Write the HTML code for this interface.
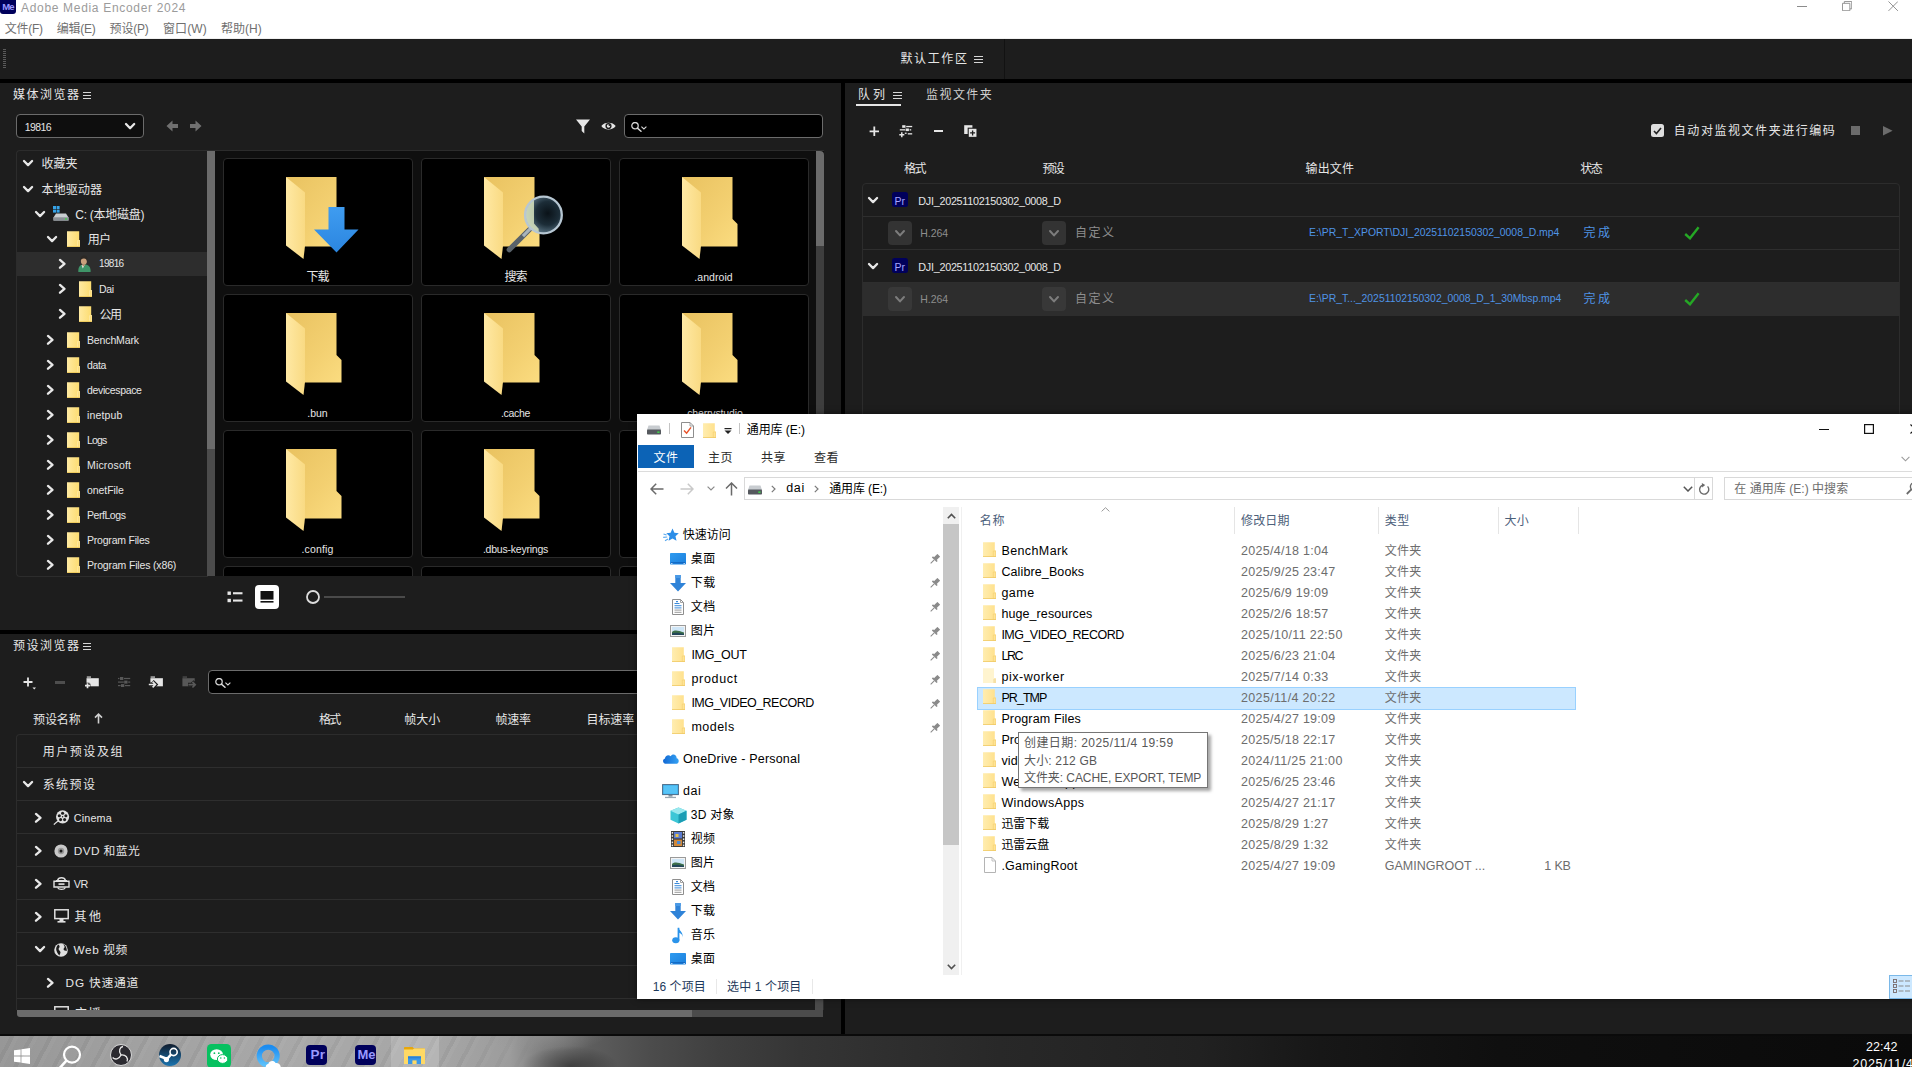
<!DOCTYPE html>
<html lang="zh-CN"><head><meta charset="utf-8"><title>Adobe Media Encoder 2024</title>
<style>
html,body{margin:0;padding:0}
body{width:1912px;height:1067px;overflow:hidden;background:#1d1d1d;position:relative;font-family:"Liberation Sans","Noto Sans CJK SC",sans-serif;}
div,span.t,svg{position:absolute}
span.t{white-space:nowrap;display:block}
.clip{overflow:hidden}
</style></head><body>
<div style="left:0px;top:0px;width:1912px;height:39px;background:#fff"></div>
<div style="left:0px;top:38px;width:1912px;height:1px;background:#f0f0f0"></div>
<div style="left:0;top:-3px;width:16px;height:17px;background:#00005b;border-radius:3px"></div>
<span class="t" style="left:2.2px;top:-3.0px;font-size:9.5px;line-height:20px;color:#9999ff;letter-spacing:-0.87px;font-weight:bold;">Me</span>
<span class="t" style="left:21px;top:-1.8px;font-size:12px;line-height:20px;color:#9b9b9b;letter-spacing:0.68px;">Adobe Media Encoder 2024</span>
<span class="t" style="left:4.7px;top:19.2px;font-size:12px;line-height:20px;color:#6f6f6f;letter-spacing:-0.23px;">文件(F)</span>
<span class="t" style="left:56.8px;top:19.2px;font-size:12px;line-height:20px;color:#6f6f6f;letter-spacing:-0.24px;">编辑(E)</span>
<span class="t" style="left:109.6px;top:19.2px;font-size:12px;line-height:20px;color:#6f6f6f;letter-spacing:-0.2px;">预设(P)</span>
<span class="t" style="left:163px;top:19.2px;font-size:12px;line-height:20px;color:#6f6f6f;letter-spacing:0.12px;">窗口(W)</span>
<span class="t" style="left:221px;top:19.2px;font-size:12px;line-height:20px;color:#6f6f6f;letter-spacing:0.04px;">帮助(H)</span>
<svg style="left:1797px;top:6px;" width="10" height="1" viewBox="0 0 10 1"><rect width="10" height="1" fill="#8c8c8c"/></svg>
<svg style="left:1842px;top:1px;" width="10.2" height="10.2" viewBox="0 0 11 11"><path d="M2.5 2.5 V0.5 H10.5 V8.5 H8.5 M0.5 2.5 H8.5 V10.5 H0.5 Z" fill="none" stroke="#8c8c8c" stroke-width="1"/></svg>
<svg style="left:1888px;top:1px;" width="10.4" height="10.4" viewBox="0 0 11 11"><path d="M0.5 0.5 L10.5 10.5 M10.5 0.5 L0.5 10.5" fill="none" stroke="#8c8c8c" stroke-width="1"/></svg>
<div style="left:0px;top:39px;width:1912px;height:40px;background:#1d1d1d"></div>
<div style="left:0px;top:79px;width:1912px;height:4px;background:#000"></div>
<div style="left:1003.5px;top:39px;width:1.5px;height:40px;background:#121212"></div>
<div style="left:3px;top:49px;width:3px;height:20px;background:repeating-linear-gradient(180deg,#5a5a5a 0 1px,transparent 1px 2px)"></div>
<span class="t" style="left:900.5px;top:48.7px;font-size:12px;line-height:20px;color:#e6e6e6;letter-spacing:1.6px;">默认工作区</span>
<div style="left:974px;top:56px;width:8.5px;height:1px;background:#e6e6e6;opacity:0.92"></div>
<div style="left:974px;top:59px;width:8.5px;height:1px;background:#e6e6e6;opacity:0.92"></div>
<div style="left:974px;top:62px;width:8.5px;height:1px;background:#e6e6e6;opacity:0.92"></div>
<div style="left:841px;top:83px;width:4px;height:952px;background:#000"></div>
<div style="left:0px;top:630px;width:841px;height:4px;background:#000"></div>
<div style="left:0px;top:1034px;width:1912px;height:2px;background:#0a0a0a"></div>
<span class="t" style="left:13px;top:84.7px;font-size:12px;line-height:20px;color:#e6e6e6;letter-spacing:1.48px;">媒体浏览器</span>
<div style="left:82.8px;top:92px;width:8.5px;height:1px;background:#e6e6e6;opacity:0.92"></div>
<div style="left:82.8px;top:95px;width:8.5px;height:1px;background:#e6e6e6;opacity:0.92"></div>
<div style="left:82.8px;top:98px;width:8.5px;height:1px;background:#e6e6e6;opacity:0.92"></div>
<div style="left:16px;top:114px;width:126px;height:22px;background:#0e0e0e;border:1px solid #6b6b6b;border-radius:4px"></div>
<span class="t" style="left:24.8px;top:117.2px;font-size:10.5px;line-height:20px;color:#e6e6e6;letter-spacing:-0.58px;">19816</span>
<svg style="left:123.9px;top:122.2px;" width="12.2" height="8.2" viewBox="0 0 12.2 8.2"><path d="M2 2 L6.1 6.2 L10.2 2" fill="none" stroke="#e8e8e8" stroke-width="2.3" stroke-linecap="round" stroke-linejoin="round"/></svg>
<svg style="left:166px;top:120px;" width="12" height="12" viewBox="0 0 12 12"><path d="M6.5 0.5 L0.5 6 L6.5 11.5 V8 H12 V4 H6.5 Z" fill="#707070"/></svg>
<svg style="left:190px;top:120px;" width="12" height="12" viewBox="0 0 12 12"><path d="M5.5 0.5 L11.5 6 L5.5 11.5 V8 H0 V4 H5.5 Z" fill="#707070"/></svg>
<svg style="left:576px;top:119px;" width="14" height="15" viewBox="0 0 14 15"><path d="M0 0.5 H14 L8.3 7.5 V14.5 L5.7 12 V7.5 Z" fill="#e6e6e6"/></svg>
<svg style="left:601px;top:121px;" width="15" height="10" viewBox="0 0 15 10"><path d="M0.3 5 C3 0.5 12 0.5 14.7 5 C12 9.5 3 9.5 0.3 5 Z" fill="#e6e6e6"/><circle cx="7.5" cy="5" r="3.1" fill="#1d1d1d"/><circle cx="7.5" cy="5" r="1.7" fill="#e6e6e6"/><circle cx="8.4" cy="4" r="0.9" fill="#1d1d1d"/></svg>
<div style="left:624px;top:114px;width:197px;height:22px;background:#000;border:1px solid #6b6b6b;border-radius:4px"></div>
<svg style="left:631.4px;top:122.2px;" width="16" height="10" viewBox="0 0 16 10"><circle cx="4" cy="3.7" r="3.2" fill="none" stroke="#d8d8d8" stroke-width="1.25"/><path d="M6.4 6.1 L10 9.2" stroke="#d8d8d8" stroke-width="1.5" stroke-linecap="round"/><path d="M10.4 4.6 L12.9 6.9 L15.4 4.6" fill="none" stroke="#d8d8d8" stroke-width="1.1"/></svg>
<div style="left:16px;top:150px;width:191px;height:425px;border:1px solid #2c2c2c;border-right:none;border-radius:4px 0 0 4px;background:#1d1d1d"></div>
<div style="left:17px;top:252px;width:190px;height:24px;background:#2d2d2d"></div>
<div style="left:207px;top:150px;width:9px;height:1px;background:#2c2c2c"></div>
<div style="left:207px;top:151px;width:8px;height:298px;background:#6b6b6b"></div>
<div style="left:207px;top:449px;width:8px;height:127px;background:#4b4b4b"></div>
<svg style="left:21.95px;top:159.15px;" width="12.1" height="8.1" viewBox="0 0 12.1 8.1"><path d="M2 2 L6.05 6.1 L10.1 2" fill="none" stroke="#e8e8e8" stroke-width="2.3" stroke-linecap="round" stroke-linejoin="round"/></svg>
<span class="t" style="left:41.6px;top:154.2px;font-size:12px;line-height:20px;color:#e6e6e6;letter-spacing:-0.05px;">收藏夹</span>
<svg style="left:21.95px;top:184.65px;" width="12.1" height="8.1" viewBox="0 0 12.1 8.1"><path d="M2 2 L6.05 6.1 L10.1 2" fill="none" stroke="#e8e8e8" stroke-width="2.3" stroke-linecap="round" stroke-linejoin="round"/></svg>
<span class="t" style="left:41.6px;top:179.7px;font-size:12px;line-height:20px;color:#e6e6e6;letter-spacing:0.1px;">本地驱动器</span>
<svg style="left:33.95px;top:209.85px;" width="12.1" height="8.1" viewBox="0 0 12.1 8.1"><path d="M2 2 L6.05 6.1 L10.1 2" fill="none" stroke="#e8e8e8" stroke-width="2.3" stroke-linecap="round" stroke-linejoin="round"/></svg>
<svg style="left:52.5px;top:206.2px;" width="16" height="15" viewBox="0 0 16 15"><rect x="0" y="0" width="3" height="3" fill="#36a3e8"/><rect x="3.6" y="0" width="3" height="3" fill="#36a3e8"/><rect x="0" y="3.6" width="3" height="3" fill="#36a3e8"/><rect x="3.6" y="3.6" width="3" height="3" fill="#36a3e8"/><path d="M3 7.5 H13 L15.5 11.5 V14.5 H0.5 V11.5 Z" fill="#c9cdd0"/><rect x="0.5" y="11.3" width="15" height="3.4" fill="#8a9096"/><rect x="12" y="12.3" width="2" height="1.4" fill="#44d048"/></svg>
<span class="t" style="left:75.3px;top:204.9px;font-size:12px;line-height:20px;color:#e6e6e6;letter-spacing:-0.26px;">C: (本地磁盘)</span>
<svg style="left:45.95px;top:234.65px;" width="12.1" height="8.1" viewBox="0 0 12.1 8.1"><path d="M2 2 L6.05 6.1 L10.1 2" fill="none" stroke="#e8e8e8" stroke-width="2.3" stroke-linecap="round" stroke-linejoin="round"/></svg>
<svg style="left:66.8px;top:231px;" width="13.3" height="16" viewBox="0 0 13.3 16"><defs><linearGradient id="sf" x1="0" y1="0" x2="1" y2="0"><stop offset="0" stop-color="#ffeaa2"/><stop offset="1" stop-color="#fcdb6c"/></linearGradient></defs>
<path d="M0 0.3 H12.2 V9.3 H13.3 V16 H0 Z" fill="url(#sf)"/><path d="M10.5 9.6 H13 V15.6 H10.5 Z" fill="#fbdd7c" stroke="#ffefb4" stroke-width="0.6"/><rect x="0" y="15.2" width="13.3" height="0.8" fill="#ecc655"/></svg>
<span class="t" style="left:87.7px;top:229.7px;font-size:12px;line-height:20px;color:#e6e6e6;letter-spacing:-0.6px;">用户</span>
<svg style="left:57.75px;top:258.15px;" width="8.5" height="11.7" viewBox="0 0 8.5 11.7"><path d="M2 2 L6.5 5.85 L2 9.7" fill="none" stroke="#e8e8e8" stroke-width="2.3" stroke-linecap="round" stroke-linejoin="round"/></svg>
<svg style="left:78.3px;top:254.5px;" width="13" height="17" viewBox="0 0 13 17"><path d="M0.3 17 C0 12 2 10 5 9.6 L8 9.6 C11.5 10.5 12.8 13 12.6 17 Z" fill="#3f9468"/><path d="M3.6 10 L4.8 13.6 L6.6 10 Z" fill="#eef2ee"/><path d="M4 9.6 L5 11.8 L7.4 9.4 Z" fill="#b88a68"/><ellipse cx="5.9" cy="6" rx="3" ry="3.8" fill="#c9a07c"/><path d="M2.6 5.4 C2 1.8 4.6 0.2 6.6 0.6 C9.2 0.8 9.8 3 9 6.4 C8.6 4.4 7.6 3.4 5.6 3.6 C4 3.8 3.2 4.4 2.6 5.4 Z" fill="#2b2825"/></svg>
<span class="t" style="left:99px;top:254.2px;font-size:10px;line-height:20px;color:#e6e6e6;letter-spacing:-0.67px;">19816</span>
<svg style="left:57.75px;top:283.15px;" width="8.5" height="11.7" viewBox="0 0 8.5 11.7"><path d="M2 2 L6.5 5.85 L2 9.7" fill="none" stroke="#e8e8e8" stroke-width="2.3" stroke-linecap="round" stroke-linejoin="round"/></svg>
<svg style="left:78.7px;top:281px;" width="13.3" height="16" viewBox="0 0 13.3 16"><defs><linearGradient id="sf" x1="0" y1="0" x2="1" y2="0"><stop offset="0" stop-color="#ffeaa2"/><stop offset="1" stop-color="#fcdb6c"/></linearGradient></defs>
<path d="M0 0.3 H12.2 V9.3 H13.3 V16 H0 Z" fill="url(#sf)"/><path d="M10.5 9.6 H13 V15.6 H10.5 Z" fill="#fbdd7c" stroke="#ffefb4" stroke-width="0.6"/><rect x="0" y="15.2" width="13.3" height="0.8" fill="#ecc655"/></svg>
<span class="t" style="left:99px;top:279.2px;font-size:10.5px;line-height:20px;color:#e6e6e6;letter-spacing:-0.3px;">Dai</span>
<svg style="left:57.75px;top:308.15px;" width="8.5" height="11.7" viewBox="0 0 8.5 11.7"><path d="M2 2 L6.5 5.85 L2 9.7" fill="none" stroke="#e8e8e8" stroke-width="2.3" stroke-linecap="round" stroke-linejoin="round"/></svg>
<svg style="left:78.7px;top:306px;" width="13.3" height="16" viewBox="0 0 13.3 16"><defs><linearGradient id="sf" x1="0" y1="0" x2="1" y2="0"><stop offset="0" stop-color="#ffeaa2"/><stop offset="1" stop-color="#fcdb6c"/></linearGradient></defs>
<path d="M0 0.3 H12.2 V9.3 H13.3 V16 H0 Z" fill="url(#sf)"/><path d="M10.5 9.6 H13 V15.6 H10.5 Z" fill="#fbdd7c" stroke="#ffefb4" stroke-width="0.6"/><rect x="0" y="15.2" width="13.3" height="0.8" fill="#ecc655"/></svg>
<span class="t" style="left:99.5px;top:304.7px;font-size:12px;line-height:20px;color:#e6e6e6;letter-spacing:-1.6px;">公用</span>
<svg style="left:45.75px;top:333.65px;" width="8.5" height="11.7" viewBox="0 0 8.5 11.7"><path d="M2 2 L6.5 5.85 L2 9.7" fill="none" stroke="#e8e8e8" stroke-width="2.3" stroke-linecap="round" stroke-linejoin="round"/></svg>
<svg style="left:66.8px;top:331.5px;" width="13.3" height="16" viewBox="0 0 13.3 16"><defs><linearGradient id="sf" x1="0" y1="0" x2="1" y2="0"><stop offset="0" stop-color="#ffeaa2"/><stop offset="1" stop-color="#fcdb6c"/></linearGradient></defs>
<path d="M0 0.3 H12.2 V9.3 H13.3 V16 H0 Z" fill="url(#sf)"/><path d="M10.5 9.6 H13 V15.6 H10.5 Z" fill="#fbdd7c" stroke="#ffefb4" stroke-width="0.6"/><rect x="0" y="15.2" width="13.3" height="0.8" fill="#ecc655"/></svg>
<span class="t" style="left:87px;top:329.7px;font-size:10.5px;line-height:20px;color:#e6e6e6;letter-spacing:-0.13px;">BenchMark</span>
<svg style="left:45.75px;top:358.65px;" width="8.5" height="11.7" viewBox="0 0 8.5 11.7"><path d="M2 2 L6.5 5.85 L2 9.7" fill="none" stroke="#e8e8e8" stroke-width="2.3" stroke-linecap="round" stroke-linejoin="round"/></svg>
<svg style="left:66.8px;top:356.5px;" width="13.3" height="16" viewBox="0 0 13.3 16"><defs><linearGradient id="sf" x1="0" y1="0" x2="1" y2="0"><stop offset="0" stop-color="#ffeaa2"/><stop offset="1" stop-color="#fcdb6c"/></linearGradient></defs>
<path d="M0 0.3 H12.2 V9.3 H13.3 V16 H0 Z" fill="url(#sf)"/><path d="M10.5 9.6 H13 V15.6 H10.5 Z" fill="#fbdd7c" stroke="#ffefb4" stroke-width="0.6"/><rect x="0" y="15.2" width="13.3" height="0.8" fill="#ecc655"/></svg>
<span class="t" style="left:87px;top:354.7px;font-size:10.5px;line-height:20px;color:#e6e6e6;letter-spacing:-0.36px;">data</span>
<svg style="left:45.75px;top:383.65px;" width="8.5" height="11.7" viewBox="0 0 8.5 11.7"><path d="M2 2 L6.5 5.85 L2 9.7" fill="none" stroke="#e8e8e8" stroke-width="2.3" stroke-linecap="round" stroke-linejoin="round"/></svg>
<svg style="left:66.8px;top:381.5px;" width="13.3" height="16" viewBox="0 0 13.3 16"><defs><linearGradient id="sf" x1="0" y1="0" x2="1" y2="0"><stop offset="0" stop-color="#ffeaa2"/><stop offset="1" stop-color="#fcdb6c"/></linearGradient></defs>
<path d="M0 0.3 H12.2 V9.3 H13.3 V16 H0 Z" fill="url(#sf)"/><path d="M10.5 9.6 H13 V15.6 H10.5 Z" fill="#fbdd7c" stroke="#ffefb4" stroke-width="0.6"/><rect x="0" y="15.2" width="13.3" height="0.8" fill="#ecc655"/></svg>
<span class="t" style="left:87px;top:379.7px;font-size:10.5px;line-height:20px;color:#e6e6e6;letter-spacing:-0.35px;">devicespace</span>
<svg style="left:45.75px;top:408.65px;" width="8.5" height="11.7" viewBox="0 0 8.5 11.7"><path d="M2 2 L6.5 5.85 L2 9.7" fill="none" stroke="#e8e8e8" stroke-width="2.3" stroke-linecap="round" stroke-linejoin="round"/></svg>
<svg style="left:66.8px;top:406.5px;" width="13.3" height="16" viewBox="0 0 13.3 16"><defs><linearGradient id="sf" x1="0" y1="0" x2="1" y2="0"><stop offset="0" stop-color="#ffeaa2"/><stop offset="1" stop-color="#fcdb6c"/></linearGradient></defs>
<path d="M0 0.3 H12.2 V9.3 H13.3 V16 H0 Z" fill="url(#sf)"/><path d="M10.5 9.6 H13 V15.6 H10.5 Z" fill="#fbdd7c" stroke="#ffefb4" stroke-width="0.6"/><rect x="0" y="15.2" width="13.3" height="0.8" fill="#ecc655"/></svg>
<span class="t" style="left:87px;top:404.7px;font-size:10.5px;line-height:20px;color:#e6e6e6;letter-spacing:0.15px;">inetpub</span>
<svg style="left:45.75px;top:433.65px;" width="8.5" height="11.7" viewBox="0 0 8.5 11.7"><path d="M2 2 L6.5 5.85 L2 9.7" fill="none" stroke="#e8e8e8" stroke-width="2.3" stroke-linecap="round" stroke-linejoin="round"/></svg>
<svg style="left:66.8px;top:431.5px;" width="13.3" height="16" viewBox="0 0 13.3 16"><defs><linearGradient id="sf" x1="0" y1="0" x2="1" y2="0"><stop offset="0" stop-color="#ffeaa2"/><stop offset="1" stop-color="#fcdb6c"/></linearGradient></defs>
<path d="M0 0.3 H12.2 V9.3 H13.3 V16 H0 Z" fill="url(#sf)"/><path d="M10.5 9.6 H13 V15.6 H10.5 Z" fill="#fbdd7c" stroke="#ffefb4" stroke-width="0.6"/><rect x="0" y="15.2" width="13.3" height="0.8" fill="#ecc655"/></svg>
<span class="t" style="left:87px;top:429.7px;font-size:10.5px;line-height:20px;color:#e6e6e6;letter-spacing:-0.8px;">Logs</span>
<svg style="left:45.75px;top:458.65px;" width="8.5" height="11.7" viewBox="0 0 8.5 11.7"><path d="M2 2 L6.5 5.85 L2 9.7" fill="none" stroke="#e8e8e8" stroke-width="2.3" stroke-linecap="round" stroke-linejoin="round"/></svg>
<svg style="left:66.8px;top:456.5px;" width="13.3" height="16" viewBox="0 0 13.3 16"><defs><linearGradient id="sf" x1="0" y1="0" x2="1" y2="0"><stop offset="0" stop-color="#ffeaa2"/><stop offset="1" stop-color="#fcdb6c"/></linearGradient></defs>
<path d="M0 0.3 H12.2 V9.3 H13.3 V16 H0 Z" fill="url(#sf)"/><path d="M10.5 9.6 H13 V15.6 H10.5 Z" fill="#fbdd7c" stroke="#ffefb4" stroke-width="0.6"/><rect x="0" y="15.2" width="13.3" height="0.8" fill="#ecc655"/></svg>
<span class="t" style="left:87px;top:454.7px;font-size:10.5px;line-height:20px;color:#e6e6e6;letter-spacing:0.16px;">Microsoft</span>
<svg style="left:45.75px;top:483.65px;" width="8.5" height="11.7" viewBox="0 0 8.5 11.7"><path d="M2 2 L6.5 5.85 L2 9.7" fill="none" stroke="#e8e8e8" stroke-width="2.3" stroke-linecap="round" stroke-linejoin="round"/></svg>
<svg style="left:66.8px;top:481.5px;" width="13.3" height="16" viewBox="0 0 13.3 16"><defs><linearGradient id="sf" x1="0" y1="0" x2="1" y2="0"><stop offset="0" stop-color="#ffeaa2"/><stop offset="1" stop-color="#fcdb6c"/></linearGradient></defs>
<path d="M0 0.3 H12.2 V9.3 H13.3 V16 H0 Z" fill="url(#sf)"/><path d="M10.5 9.6 H13 V15.6 H10.5 Z" fill="#fbdd7c" stroke="#ffefb4" stroke-width="0.6"/><rect x="0" y="15.2" width="13.3" height="0.8" fill="#ecc655"/></svg>
<span class="t" style="left:87px;top:479.7px;font-size:10.5px;line-height:20px;color:#e6e6e6;letter-spacing:-0.07px;">onetFile</span>
<svg style="left:45.75px;top:508.65px;" width="8.5" height="11.7" viewBox="0 0 8.5 11.7"><path d="M2 2 L6.5 5.85 L2 9.7" fill="none" stroke="#e8e8e8" stroke-width="2.3" stroke-linecap="round" stroke-linejoin="round"/></svg>
<svg style="left:66.8px;top:506.5px;" width="13.3" height="16" viewBox="0 0 13.3 16"><defs><linearGradient id="sf" x1="0" y1="0" x2="1" y2="0"><stop offset="0" stop-color="#ffeaa2"/><stop offset="1" stop-color="#fcdb6c"/></linearGradient></defs>
<path d="M0 0.3 H12.2 V9.3 H13.3 V16 H0 Z" fill="url(#sf)"/><path d="M10.5 9.6 H13 V15.6 H10.5 Z" fill="#fbdd7c" stroke="#ffefb4" stroke-width="0.6"/><rect x="0" y="15.2" width="13.3" height="0.8" fill="#ecc655"/></svg>
<span class="t" style="left:87px;top:504.7px;font-size:10.5px;line-height:20px;color:#e6e6e6;letter-spacing:-0.45px;">PerfLogs</span>
<svg style="left:45.75px;top:533.65px;" width="8.5" height="11.7" viewBox="0 0 8.5 11.7"><path d="M2 2 L6.5 5.85 L2 9.7" fill="none" stroke="#e8e8e8" stroke-width="2.3" stroke-linecap="round" stroke-linejoin="round"/></svg>
<svg style="left:66.8px;top:531.5px;" width="13.3" height="16" viewBox="0 0 13.3 16"><defs><linearGradient id="sf" x1="0" y1="0" x2="1" y2="0"><stop offset="0" stop-color="#ffeaa2"/><stop offset="1" stop-color="#fcdb6c"/></linearGradient></defs>
<path d="M0 0.3 H12.2 V9.3 H13.3 V16 H0 Z" fill="url(#sf)"/><path d="M10.5 9.6 H13 V15.6 H10.5 Z" fill="#fbdd7c" stroke="#ffefb4" stroke-width="0.6"/><rect x="0" y="15.2" width="13.3" height="0.8" fill="#ecc655"/></svg>
<span class="t" style="left:87px;top:529.7px;font-size:10.5px;line-height:20px;color:#e6e6e6;letter-spacing:-0.21px;">Program Files</span>
<svg style="left:45.75px;top:558.65px;" width="8.5" height="11.7" viewBox="0 0 8.5 11.7"><path d="M2 2 L6.5 5.85 L2 9.7" fill="none" stroke="#e8e8e8" stroke-width="2.3" stroke-linecap="round" stroke-linejoin="round"/></svg>
<svg style="left:66.8px;top:556.5px;" width="13.3" height="16" viewBox="0 0 13.3 16"><defs><linearGradient id="sf" x1="0" y1="0" x2="1" y2="0"><stop offset="0" stop-color="#ffeaa2"/><stop offset="1" stop-color="#fcdb6c"/></linearGradient></defs>
<path d="M0 0.3 H12.2 V9.3 H13.3 V16 H0 Z" fill="url(#sf)"/><path d="M10.5 9.6 H13 V15.6 H10.5 Z" fill="#fbdd7c" stroke="#ffefb4" stroke-width="0.6"/><rect x="0" y="15.2" width="13.3" height="0.8" fill="#ecc655"/></svg>
<span class="t" style="left:87px;top:554.7px;font-size:10.5px;line-height:20px;color:#e6e6e6;letter-spacing:-0.16px;">Program Files (x86)</span>
<div class="clip" style="left:215px;top:150px;width:609px;height:426px;background:#0f0f0f;border-top:1px solid #2c2c2c;box-sizing:border-box">
<div style="left:8px;top:7px;width:188px;height:126px;background:#000;border:1px solid #2a2a2a;border-radius:4px"></div>
<div style="left:206px;top:7px;width:188px;height:126px;background:#000;border:1px solid #2a2a2a;border-radius:4px"></div>
<div style="left:404px;top:7px;width:188px;height:126px;background:#000;border:1px solid #2a2a2a;border-radius:4px"></div>
<div style="left:8px;top:143px;width:188px;height:126px;background:#000;border:1px solid #2a2a2a;border-radius:4px"></div>
<div style="left:206px;top:143px;width:188px;height:126px;background:#000;border:1px solid #2a2a2a;border-radius:4px"></div>
<div style="left:404px;top:143px;width:188px;height:126px;background:#000;border:1px solid #2a2a2a;border-radius:4px"></div>
<div style="left:8px;top:279px;width:188px;height:126px;background:#000;border:1px solid #2a2a2a;border-radius:4px"></div>
<div style="left:206px;top:279px;width:188px;height:126px;background:#000;border:1px solid #2a2a2a;border-radius:4px"></div>
<div style="left:404px;top:279px;width:188px;height:126px;background:#000;border:1px solid #2a2a2a;border-radius:4px"></div>
<div style="left:8px;top:415px;width:188px;height:126px;background:#000;border:1px solid #2a2a2a;border-radius:4px"></div>
<div style="left:206px;top:415px;width:188px;height:126px;background:#000;border:1px solid #2a2a2a;border-radius:4px"></div>
<div style="left:404px;top:415px;width:188px;height:126px;background:#000;border:1px solid #2a2a2a;border-radius:4px"></div>
</div>
<svg style="left:285.5px;top:176.9px;" width="56" height="83" viewBox="0 0 56 83"><defs>
<linearGradient id="bfb" x1="0" y1="0" x2="1" y2="1"><stop offset="0" stop-color="#e9c260"/><stop offset="0.6" stop-color="#f3d071"/><stop offset="1" stop-color="#fbdc80"/></linearGradient>
<linearGradient id="bff" x1="0" y1="0" x2="1" y2="0"><stop offset="0" stop-color="#ffe9a4"/><stop offset="1" stop-color="#f9da83"/></linearGradient>
</defs>
<path d="M0 0 H50.5 V42 L55.5 47 V69.5 H17 Z" fill="url(#bfb)"/>
<path d="M0 0 L19 15.5 V69 L17.5 82 L0 68.5 Z" fill="url(#bff)"/></svg>
<svg style="left:313.5px;top:207px;" width="45" height="46" viewBox="0 0 45 46"><defs><linearGradient id="dla" x1="0" y1="0" x2="0" y2="1"><stop offset="0" stop-color="#3f9cf0"/><stop offset="1" stop-color="#2b86e0"/></linearGradient></defs><path d="M14.5 0 H30.5 V22.5 H44.5 L22.5 45.5 L0 22.5 H14.5 Z" fill="url(#dla)"/></svg>
<span class="t" style="left:117.5px;width:400px;text-align:center;top:266.7px;font-size:12px;line-height:20px;color:#e6e6e6;letter-spacing:-1.1px;"><span>下载</span></span>
<svg style="left:483.5px;top:176.9px;" width="56" height="83" viewBox="0 0 56 83"><defs>
<linearGradient id="bfb" x1="0" y1="0" x2="1" y2="1"><stop offset="0" stop-color="#e9c260"/><stop offset="0.6" stop-color="#f3d071"/><stop offset="1" stop-color="#fbdc80"/></linearGradient>
<linearGradient id="bff" x1="0" y1="0" x2="1" y2="0"><stop offset="0" stop-color="#ffe9a4"/><stop offset="1" stop-color="#f9da83"/></linearGradient>
</defs>
<path d="M0 0 H50.5 V42 L55.5 47 V69.5 H17 Z" fill="url(#bfb)"/>
<path d="M0 0 L19 15.5 V69 L17.5 82 L0 68.5 Z" fill="url(#bff)"/></svg>
<svg style="left:502.5px;top:193px;" width="63" height="63" viewBox="0 0 60 60"><defs><radialGradient id="mg" cx="0.62" cy="0.45" r="0.6"><stop offset="0" stop-color="#0a1218"/><stop offset="0.55" stop-color="#1c2d38"/><stop offset="1" stop-color="#5c7686"/></radialGradient>
<clipPath id="mgc"><circle cx="38.5" cy="21" r="17"/></clipPath></defs>
<path d="M25 35 L6 54" stroke="#59626a" stroke-width="5" stroke-linecap="round"/><path d="M27 33 L19 41" stroke="#aab4bb" stroke-width="3"/>
<circle cx="38.5" cy="21" r="17" fill="url(#mg)"/>
<g clip-path="url(#mgc)"><path d="M18 0 H29.5 V29 L34 34 V45 H18 Z" fill="#d8e4c0" opacity="0.85"/></g>
<circle cx="38.5" cy="21" r="17.5" fill="none" stroke="#b7c7d3" stroke-width="2.2"/></svg>
<span class="t" style="left:315.5px;width:400px;text-align:center;top:266.7px;font-size:12px;line-height:20px;color:#e6e6e6;letter-spacing:-1.1px;"><span>搜索</span></span>
<svg style="left:681.5px;top:176.9px;" width="56" height="83" viewBox="0 0 56 83"><defs>
<linearGradient id="bfb" x1="0" y1="0" x2="1" y2="1"><stop offset="0" stop-color="#e9c260"/><stop offset="0.6" stop-color="#f3d071"/><stop offset="1" stop-color="#fbdc80"/></linearGradient>
<linearGradient id="bff" x1="0" y1="0" x2="1" y2="0"><stop offset="0" stop-color="#ffe9a4"/><stop offset="1" stop-color="#f9da83"/></linearGradient>
</defs>
<path d="M0 0 H50.5 V42 L55.5 47 V69.5 H17 Z" fill="url(#bfb)"/>
<path d="M0 0 L19 15.5 V69 L17.5 82 L0 68.5 Z" fill="url(#bff)"/></svg>
<span class="t" style="left:513.5px;width:400px;text-align:center;top:266.7px;font-size:10.5px;line-height:20px;color:#e6e6e6;letter-spacing:0.06px;"><span>.android</span></span>
<svg style="left:285.5px;top:312.9px;" width="56" height="83" viewBox="0 0 56 83"><defs>
<linearGradient id="bfb" x1="0" y1="0" x2="1" y2="1"><stop offset="0" stop-color="#e9c260"/><stop offset="0.6" stop-color="#f3d071"/><stop offset="1" stop-color="#fbdc80"/></linearGradient>
<linearGradient id="bff" x1="0" y1="0" x2="1" y2="0"><stop offset="0" stop-color="#ffe9a4"/><stop offset="1" stop-color="#f9da83"/></linearGradient>
</defs>
<path d="M0 0 H50.5 V42 L55.5 47 V69.5 H17 Z" fill="url(#bfb)"/>
<path d="M0 0 L19 15.5 V69 L17.5 82 L0 68.5 Z" fill="url(#bff)"/></svg>
<span class="t" style="left:117.5px;width:400px;text-align:center;top:402.7px;font-size:10.5px;line-height:20px;color:#e6e6e6;letter-spacing:-0.02px;"><span>.bun</span></span>
<svg style="left:483.5px;top:312.9px;" width="56" height="83" viewBox="0 0 56 83"><defs>
<linearGradient id="bfb" x1="0" y1="0" x2="1" y2="1"><stop offset="0" stop-color="#e9c260"/><stop offset="0.6" stop-color="#f3d071"/><stop offset="1" stop-color="#fbdc80"/></linearGradient>
<linearGradient id="bff" x1="0" y1="0" x2="1" y2="0"><stop offset="0" stop-color="#ffe9a4"/><stop offset="1" stop-color="#f9da83"/></linearGradient>
</defs>
<path d="M0 0 H50.5 V42 L55.5 47 V69.5 H17 Z" fill="url(#bfb)"/>
<path d="M0 0 L19 15.5 V69 L17.5 82 L0 68.5 Z" fill="url(#bff)"/></svg>
<span class="t" style="left:315.5px;width:400px;text-align:center;top:402.7px;font-size:10.5px;line-height:20px;color:#e6e6e6;letter-spacing:-0.31px;"><span>.cache</span></span>
<svg style="left:681.5px;top:312.9px;" width="56" height="83" viewBox="0 0 56 83"><defs>
<linearGradient id="bfb" x1="0" y1="0" x2="1" y2="1"><stop offset="0" stop-color="#e9c260"/><stop offset="0.6" stop-color="#f3d071"/><stop offset="1" stop-color="#fbdc80"/></linearGradient>
<linearGradient id="bff" x1="0" y1="0" x2="1" y2="0"><stop offset="0" stop-color="#ffe9a4"/><stop offset="1" stop-color="#f9da83"/></linearGradient>
</defs>
<path d="M0 0 H50.5 V42 L55.5 47 V69.5 H17 Z" fill="url(#bfb)"/>
<path d="M0 0 L19 15.5 V69 L17.5 82 L0 68.5 Z" fill="url(#bff)"/></svg>
<span class="t" style="left:513.5px;width:400px;text-align:center;top:402.7px;font-size:10.5px;line-height:20px;color:#e6e6e6;letter-spacing:-0.15px;"><span>.cherrystudio</span></span>
<svg style="left:285.5px;top:448.9px;" width="56" height="83" viewBox="0 0 56 83"><defs>
<linearGradient id="bfb" x1="0" y1="0" x2="1" y2="1"><stop offset="0" stop-color="#e9c260"/><stop offset="0.6" stop-color="#f3d071"/><stop offset="1" stop-color="#fbdc80"/></linearGradient>
<linearGradient id="bff" x1="0" y1="0" x2="1" y2="0"><stop offset="0" stop-color="#ffe9a4"/><stop offset="1" stop-color="#f9da83"/></linearGradient>
</defs>
<path d="M0 0 H50.5 V42 L55.5 47 V69.5 H17 Z" fill="url(#bfb)"/>
<path d="M0 0 L19 15.5 V69 L17.5 82 L0 68.5 Z" fill="url(#bff)"/></svg>
<span class="t" style="left:117.5px;width:400px;text-align:center;top:538.7px;font-size:10.5px;line-height:20px;color:#e6e6e6;letter-spacing:0.15px;"><span>.config</span></span>
<svg style="left:483.5px;top:448.9px;" width="56" height="83" viewBox="0 0 56 83"><defs>
<linearGradient id="bfb" x1="0" y1="0" x2="1" y2="1"><stop offset="0" stop-color="#e9c260"/><stop offset="0.6" stop-color="#f3d071"/><stop offset="1" stop-color="#fbdc80"/></linearGradient>
<linearGradient id="bff" x1="0" y1="0" x2="1" y2="0"><stop offset="0" stop-color="#ffe9a4"/><stop offset="1" stop-color="#f9da83"/></linearGradient>
</defs>
<path d="M0 0 H50.5 V42 L55.5 47 V69.5 H17 Z" fill="url(#bfb)"/>
<path d="M0 0 L19 15.5 V69 L17.5 82 L0 68.5 Z" fill="url(#bff)"/></svg>
<span class="t" style="left:315.5px;width:400px;text-align:center;top:538.7px;font-size:10.5px;line-height:20px;color:#e6e6e6;letter-spacing:-0.22px;"><span>.dbus-keyrings</span></span>
<div style="left:816px;top:151px;width:8px;height:95px;background:#6b6b6b;border-radius:0 4px 0 0"></div>
<div style="left:816px;top:246px;width:8px;height:330px;background:#3e3e3e"></div>
<svg style="left:227px;top:591px;" width="16" height="12" viewBox="0 0 16 12"><rect x="0.5" y="0.5" width="3.4" height="3.4" fill="#e6e6e6"/><rect x="6" y="1.2" width="9.5" height="2.1" fill="#e6e6e6"/><rect x="0.5" y="7.8" width="3.4" height="3.4" fill="#e6e6e6"/><rect x="6" y="8.5" width="9.5" height="2.1" fill="#e6e6e6"/></svg>
<div style="left:255px;top:585px;width:24px;height:24px;background:#fff;border-radius:4px"></div>
<svg style="left:260px;top:591px;" width="14" height="12" viewBox="0 0 14 12"><rect x="0.5" y="0" width="13" height="8.6" fill="#111"/><rect x="0.5" y="10" width="13" height="1.6" fill="#111"/></svg>
<svg style="left:305px;top:589px;" width="16" height="16" viewBox="0 0 16 16"><circle cx="8" cy="8" r="6" fill="none" stroke="#dcdcdc" stroke-width="1.8"/></svg>
<div style="left:324px;top:596.3px;width:81px;height:1.4px;background:#4a4a4a"></div>
<span class="t" style="left:13px;top:636.2px;font-size:12px;line-height:20px;color:#e6e6e6;letter-spacing:1.48px;">预设浏览器</span>
<div style="left:82.8px;top:643px;width:8.5px;height:1px;background:#e6e6e6;opacity:0.92"></div>
<div style="left:82.8px;top:646px;width:8.5px;height:1px;background:#e6e6e6;opacity:0.92"></div>
<div style="left:82.8px;top:649px;width:8.5px;height:1px;background:#e6e6e6;opacity:0.92"></div>
<svg style="left:23px;top:677px;" width="14" height="14" viewBox="0 0 14 14"><path d="M5 0.5 V9.5 M0.5 5 H9.5" stroke="#e6e6e6" stroke-width="1.8" fill="none"/><path d="M9.5 10.5 H13 L11.25 12.6 Z" fill="#e6e6e6"/></svg>
<div style="left:55px;top:681.4px;width:10px;height:2.2px;background:#4e4e4e"></div>
<svg style="left:84px;top:676px;" width="16" height="13" viewBox="0 0 16 13"><rect x="2.8" y="0.5" width="4.2" height="1.1" fill="#e6e6e6"/><rect x="2.5" y="2.2" width="12.3" height="8.1" fill="#e6e6e6"/><path d="M3.5 6.8 V12.6 M0.6 9.7 H6.4" stroke="#1d1d1d" stroke-width="3.8"/><path d="M3.5 7.2 V12.2 M1 9.7 H6" stroke="#e6e6e6" stroke-width="1.7"/></svg>
<svg style="left:117.8px;top:676.5px;" width="13" height="10" viewBox="0 0 13 10"><g fill="#585858"><rect x="0" y="0.9" width="1.4" height="1.2"/><rect x="2" y="0" width="3.3" height="3"/><rect x="6" y="0.9" width="6.2" height="1.2"/><rect x="0" y="4.5" width="5.8" height="1.2"/><rect x="6.2" y="3.6" width="3.3" height="3"/><rect x="10.2" y="4.5" width="2" height="1.2"/><rect x="0" y="8" width="2.6" height="1.2"/><rect x="3" y="7.1" width="3.3" height="3"/><rect x="7" y="8" width="5.2" height="1.2"/></g></svg>
<svg style="left:147.5px;top:676px;" width="16" height="13" viewBox="0 0 16 13"><rect x="2.6" y="0.5" width="4.4" height="1.1" fill="#e6e6e6"/><rect x="2.4" y="2.2" width="12.5" height="8.1" fill="#e6e6e6"/><path d="M0.4 8.5 H7 M4.4 5.3 L7.6 8.5 L4.4 11.7" stroke="#1d1d1d" stroke-width="3.8" fill="none"/><path d="M0.8 8.5 H7 M4.6 5.7 L7.4 8.5 L4.6 11.3" stroke="#e6e6e6" stroke-width="1.7" fill="none"/></svg>
<svg style="left:181.5px;top:676px;" width="16" height="13" viewBox="0 0 16 13"><rect x="0.6" y="0.5" width="4.4" height="1.1" fill="#585858"/><rect x="0.4" y="2.2" width="12.3" height="8.1" fill="#585858"/><path d="M6 8.7 H12.8 M10.2 5.5 L13.4 8.7 L10.2 11.9" stroke="#1d1d1d" stroke-width="3.8" fill="none"/><path d="M6.4 8.7 H12.8 M10.4 5.9 L13.2 8.7 L10.4 11.5" stroke="#585858" stroke-width="1.7" fill="none"/></svg>
<div style="left:208px;top:670px;width:613px;height:22px;background:#000;border:1px solid #6b6b6b;border-radius:4px"></div>
<svg style="left:215.4px;top:678px;" width="16" height="10" viewBox="0 0 16 10"><circle cx="4" cy="3.7" r="3.2" fill="none" stroke="#d8d8d8" stroke-width="1.25"/><path d="M6.4 6.1 L10 9.2" stroke="#d8d8d8" stroke-width="1.5" stroke-linecap="round"/><path d="M10.4 4.6 L12.9 6.9 L15.4 4.6" fill="none" stroke="#d8d8d8" stroke-width="1.1"/></svg>
<span class="t" style="left:33px;top:709.9px;font-size:12px;line-height:20px;color:#e6e6e6;letter-spacing:-0.1px;">预设名称</span>
<svg style="left:94px;top:713px;" width="9" height="11" viewBox="0 0 9 11"><path d="M4.5 10.5 V1.5 M1 4.6 L4.5 1.2 L8 4.6" stroke="#d0d0d0" stroke-width="1.6" fill="none"/></svg>
<span class="t" style="left:318.9px;top:709.9px;font-size:12px;line-height:20px;color:#e6e6e6;letter-spacing:-1.6px;">格式</span>
<span class="t" style="left:404.3px;top:709.9px;font-size:12px;line-height:20px;color:#e6e6e6;letter-spacing:-0.05px;">帧大小</span>
<span class="t" style="left:495.5px;top:709.9px;font-size:12px;line-height:20px;color:#e6e6e6;letter-spacing:-0.3px;">帧速率</span>
<span class="t" style="left:586.5px;top:709.9px;font-size:12px;line-height:20px;color:#e6e6e6;letter-spacing:-0.1px;">目标速率</span>
<div class="clip" style="left:16px;top:734px;width:808px;height:276px;border:1px solid #2c2c2c;border-bottom:none;border-radius:4px 4px 0 0;box-sizing:border-box">
<div style="left:0;top:31.5px;width:808px;height:1.3px;background:#2e2e2e"></div>
<div style="left:0;top:64.5px;width:808px;height:1.3px;background:#2e2e2e"></div>
<div style="left:0;top:97.5px;width:808px;height:1.3px;background:#2e2e2e"></div>
<div style="left:0;top:130.5px;width:808px;height:1.3px;background:#2e2e2e"></div>
<div style="left:0;top:163.5px;width:808px;height:1.3px;background:#2e2e2e"></div>
<div style="left:0;top:196.5px;width:808px;height:1.3px;background:#2e2e2e"></div>
<div style="left:0;top:229.5px;width:808px;height:1.3px;background:#2e2e2e"></div>
<div style="left:0;top:262.5px;width:808px;height:1.3px;background:#2e2e2e"></div>
</div>
<span class="t" style="left:42.7px;top:742.3px;font-size:12px;line-height:20px;color:#e6e6e6;letter-spacing:1.56px;">用户预设及组</span>
<svg style="left:21.95px;top:779.95px;" width="12.1" height="8.1" viewBox="0 0 12.1 8.1"><path d="M2 2 L6.05 6.1 L10.1 2" fill="none" stroke="#e8e8e8" stroke-width="2.3" stroke-linecap="round" stroke-linejoin="round"/></svg>
<span class="t" style="left:42.7px;top:774.9px;font-size:12px;line-height:20px;color:#e6e6e6;letter-spacing:1.4px;">系统预设</span>
<svg style="left:33.95px;top:811.65px;" width="8.5" height="11.7" viewBox="0 0 8.5 11.7"><path d="M2 2 L6.5 5.85 L2 9.7" fill="none" stroke="#e8e8e8" stroke-width="2.3" stroke-linecap="round" stroke-linejoin="round"/></svg>
<svg style="left:52.5px;top:810px;" width="17" height="15" viewBox="0 0 17 15"><circle cx="9.6" cy="6.8" r="6.6" fill="#e0e0e0"/><g fill="#1d1d1d"><circle cx="9.6" cy="3.3" r="1.55"/><circle cx="6.3" cy="5.7" r="1.55"/><circle cx="12.9" cy="5.7" r="1.55"/><circle cx="7.6" cy="9.6" r="1.55"/><circle cx="11.6" cy="9.6" r="1.55"/><circle cx="9.6" cy="6.8" r="0.7"/></g><path d="M5 11 C3.5 12 2 13.6 0.8 14.6" stroke="#e0e0e0" stroke-width="1.3" fill="none"/></svg>
<span class="t" style="left:73.8px;top:808.4px;font-size:10.8px;line-height:20px;color:#e6e6e6;letter-spacing:0.15px;">Cinema</span>
<svg style="left:33.95px;top:844.65px;" width="8.5" height="11.7" viewBox="0 0 8.5 11.7"><path d="M2 2 L6.5 5.85 L2 9.7" fill="none" stroke="#e8e8e8" stroke-width="2.3" stroke-linecap="round" stroke-linejoin="round"/></svg>
<svg style="left:53.5px;top:843.5px;" width="14" height="14" viewBox="0 0 14 14"><circle cx="7" cy="7" r="6.6" fill="#c9c9c9"/><circle cx="7" cy="7" r="3.2" fill="#9a9a9a"/><circle cx="7" cy="7" r="1.5" fill="#1d1d1d"/></svg>
<span class="t" style="left:73.8px;top:841.4px;font-size:11.8px;line-height:20px;color:#e6e6e6;letter-spacing:0.41px;">DVD 和蓝光</span>
<svg style="left:33.95px;top:877.65px;" width="8.5" height="11.7" viewBox="0 0 8.5 11.7"><path d="M2 2 L6.5 5.85 L2 9.7" fill="none" stroke="#e8e8e8" stroke-width="2.3" stroke-linecap="round" stroke-linejoin="round"/></svg>
<svg style="left:52.5px;top:876px;" width="17" height="15" viewBox="0 0 17 15"><path d="M3 4.6 H14 M1 5.2 H16 V11 H1 Z" fill="none" stroke="#e0e0e0" stroke-width="1.4"/><path d="M4.5 4.5 C5.5 0.8 11.5 0.8 12.5 4.5" fill="none" stroke="#e0e0e0" stroke-width="1.3"/><path d="M4.5 11.5 C6 14 11 14 12.5 11.5" fill="none" stroke="#e0e0e0" stroke-width="1.3"/><rect x="5.5" y="7.3" width="6" height="1.6" fill="#e0e0e0"/></svg>
<span class="t" style="left:73.8px;top:874.4px;font-size:10.8px;line-height:20px;color:#e6e6e6;letter-spacing:-0.62px;">VR</span>
<svg style="left:33.95px;top:910.65px;" width="8.5" height="11.7" viewBox="0 0 8.5 11.7"><path d="M2 2 L6.5 5.85 L2 9.7" fill="none" stroke="#e8e8e8" stroke-width="2.3" stroke-linecap="round" stroke-linejoin="round"/></svg>
<svg style="left:53.5px;top:908.6px;" width="15" height="14" viewBox="0 0 15 14"><rect x="0.8" y="0.8" width="13.4" height="8.8" fill="none" stroke="#e0e0e0" stroke-width="1.5"/><rect x="5.5" y="10" width="4" height="2" fill="#e0e0e0"/><rect x="3.5" y="12" width="8" height="1.6" fill="#e0e0e0"/></svg>
<span class="t" style="left:74.6px;top:907.3px;font-size:12px;line-height:20px;color:#e6e6e6;letter-spacing:2.4px;">其他</span>
<svg style="left:33.95px;top:944.95px;" width="12.1" height="8.1" viewBox="0 0 12.1 8.1"><path d="M2 2 L6.05 6.1 L10.1 2" fill="none" stroke="#e8e8e8" stroke-width="2.3" stroke-linecap="round" stroke-linejoin="round"/></svg>
<svg style="left:53.5px;top:942.5px;" width="14" height="14" viewBox="0 0 14 14"><circle cx="7" cy="7" r="6.8" fill="#e0e0e0"/><path d="M4.2 1.4 C5.8 2.4 6 3.8 5 5 C4 6.2 5.2 7.2 6.2 8.4 C7 9.6 6 10.6 5.4 12.4 C3.6 11 3 9 2.4 7.4 C1.8 5.8 2.4 3 4.2 1.4 Z M9.4 1 C9.6 2.4 10.8 2.8 10.6 4 C10.4 5 9.4 5.4 9.6 6.6 C9.9 7.8 11.4 7.6 12.8 8 C13 5.4 11.8 2.4 9.4 1 Z" fill="#1d1d1d"/></svg>
<span class="t" style="left:73.5px;top:940.4px;font-size:11.8px;line-height:20px;color:#e6e6e6;letter-spacing:0.58px;">Web 视频</span>
<svg style="left:45.75px;top:976.65px;" width="8.5" height="11.7" viewBox="0 0 8.5 11.7"><path d="M2 2 L6.5 5.85 L2 9.7" fill="none" stroke="#e8e8e8" stroke-width="2.3" stroke-linecap="round" stroke-linejoin="round"/></svg>
<span class="t" style="left:65.6px;top:973.4px;font-size:11.8px;line-height:20px;color:#e6e6e6;letter-spacing:0.77px;">DG 快速通道</span>
<div class="clip" style="left:17px;top:999px;width:700px;height:11px">
<svg style="left:36.5px;top:7px" width="15" height="14" viewBox="0 0 15 14"><rect x="0.8" y="0.8" width="13.4" height="8.8" fill="none" stroke="#e0e0e0" stroke-width="1.5"/></svg>
<span class="t" style="left:57px;top:5px;font-size:13px;line-height:20px;color:#e6e6e6;letter-spacing:1px">广播</span>
</div>
<div style="left:17px;top:1010px;width:675px;height:7px;background:#6b6b6b;border-radius:0 0 0 3px"></div>
<div style="left:692px;top:1010px;width:131px;height:7px;background:#4b4b4b"></div>
<div style="left:815px;top:735px;width:8px;height:282px;background:#4b4b4b"></div>
<span class="t" style="left:858px;top:85.0px;font-size:12px;line-height:20px;color:#e6e6e6;letter-spacing:2.9px;">队列</span>
<div style="left:893px;top:92px;width:8.5px;height:1px;background:#e6e6e6;opacity:0.92"></div>
<div style="left:893px;top:95px;width:8.5px;height:1px;background:#e6e6e6;opacity:0.92"></div>
<div style="left:893px;top:98px;width:8.5px;height:1px;background:#e6e6e6;opacity:0.92"></div>
<div style="left:856px;top:104.4px;width:45px;height:1.6px;background:#e6e6e6"></div>
<span class="t" style="left:926px;top:85.0px;font-size:12px;line-height:20px;color:#d0d0d0;letter-spacing:1.45px;">监视文件夹</span>
<svg style="left:868.5px;top:126px;" width="11" height="11" viewBox="0 0 11 11"><path d="M5.3 0.6 V10 M0.6 5.3 H10" stroke="#e6e6e6" stroke-width="1.8" fill="none"/></svg>
<svg style="left:899px;top:125px;" width="14" height="13" viewBox="0 0 14 13"><g fill="#e6e6e6"><rect x="3.2" y="0.2" width="3.3" height="2.6"/><rect x="7.2" y="0.9" width="6" height="1.3"/><rect x="0.8" y="4.2" width="5.2" height="1.3"/><rect x="6.6" y="3.5" width="3.3" height="2.6"/><rect x="10.6" y="4.2" width="1.6" height="1.3"/><rect x="5.8" y="7.6" width="1.8" height="1.3"/><rect x="8.8" y="8.2" width="4.4" height="1.3"/></g><path d="M2.8 7.2 V12.2 M0.3 9.7 H5.3" stroke="#e6e6e6" stroke-width="1.5"/></svg>
<div style="left:933.5px;top:130.4px;width:9.5px;height:1.8px;background:#e6e6e6"></div>
<svg style="left:963.8px;top:125px;" width="14" height="13" viewBox="0 0 14 13"><rect x="0.2" y="0.2" width="8.2" height="8.8" fill="#e6e6e6"/><rect x="4.2" y="3.2" width="8.8" height="9.2" fill="#e6e6e6" stroke="#1d1d1d" stroke-width="1.1"/><path d="M8.6 5.4 V10.4 M6.1 7.9 H11.1" stroke="#1d1d1d" stroke-width="1.3"/></svg>
<div style="left:1651px;top:124.3px;width:12.6px;height:12.6px;background:#dedede;border-radius:2.5px"></div>
<svg style="left:1653px;top:126.5px;" width="9" height="8" viewBox="0 0 9 8"><path d="M1 4 L3.4 6.6 L8 1" fill="none" stroke="#222" stroke-width="1.6"/></svg>
<span class="t" style="left:1673.8px;top:121.2px;font-size:12px;line-height:20px;color:#e6e6e6;letter-spacing:1.55px;">自动对监视文件夹进行编码</span>
<div style="left:1851px;top:126px;width:9.4px;height:9.2px;background:#6b6b6b"></div>
<svg style="left:1883px;top:126px;" width="10" height="10" viewBox="0 0 10 10"><path d="M0 0 L9.6 4.7 L0 9.4 Z" fill="#6b6b6b"/></svg>
<span class="t" style="left:904px;top:158.9px;font-size:12px;line-height:20px;color:#e6e6e6;letter-spacing:-1.6px;">格式</span>
<span class="t" style="left:1042.4px;top:158.9px;font-size:12px;line-height:20px;color:#e6e6e6;letter-spacing:-1.6px;">预设</span>
<span class="t" style="left:1305.5px;top:158.9px;font-size:12px;line-height:20px;color:#e6e6e6;letter-spacing:0.13px;">输出文件</span>
<span class="t" style="left:1580.3px;top:158.9px;font-size:12px;line-height:20px;color:#e6e6e6;letter-spacing:-1.6px;">状态</span>
<div class="clip" style="left:862px;top:183px;width:1038px;height:800px;border:1px solid #2c2c2c;border-radius:4px;box-sizing:border-box">
<div style="left:0;top:98px;width:1038px;height:33.5px;background:#2d2d2d"></div>
<div style="left:0;top:31.8px;width:1038px;height:1.3px;background:#2e2e2e"></div>
<div style="left:0;top:64.8px;width:1038px;height:1.3px;background:#2e2e2e"></div>
<div style="left:0;top:97.8px;width:1038px;height:1.3px;background:#2e2e2e"></div>
</div>
<svg style="left:867.25px;top:195.65px;" width="12.1" height="8.1" viewBox="0 0 12.1 8.1"><path d="M2 2 L6.05 6.1 L10.1 2" fill="none" stroke="#e8e8e8" stroke-width="2.3" stroke-linecap="round" stroke-linejoin="round"/></svg>
<div style="left:892px;top:191.8px;width:16px;height:15.6px;background:#00005b;border-radius:2.5px"></div>
<span class="t" style="left:894.6px;top:190.5px;font-size:10.5px;line-height:20px;color:#a5a5ff;letter-spacing:-0.2px;">Pr</span>
<span class="t" style="left:918.3px;top:190.9px;font-size:10.8px;line-height:20px;color:#e6e6e6;letter-spacing:-0.27px;">DJI_20251102150302_0008_D</span>
<div style="left:888px;top:221px;width:24px;height:24px;background:#333;border-radius:4px"></div>
<svg style="left:894.0px;top:228.8px;" width="12" height="8.4" viewBox="0 0 12 8.4"><path d="M2 2 L6.0 6.4 L10 2" fill="none" stroke="#7d7d7d" stroke-width="2" stroke-linecap="round" stroke-linejoin="round"/></svg>
<span class="t" style="left:920.3px;top:223.3px;font-size:10.5px;line-height:20px;color:#8e8e8e;letter-spacing:-0.04px;">H.264</span>
<div style="left:1042px;top:221px;width:24px;height:24px;background:#333;border-radius:4px"></div>
<svg style="left:1048.0px;top:228.8px;" width="12" height="8.4" viewBox="0 0 12 8.4"><path d="M2 2 L6.0 6.4 L10 2" fill="none" stroke="#7d7d7d" stroke-width="2" stroke-linecap="round" stroke-linejoin="round"/></svg>
<span class="t" style="left:1075px;top:223.4px;font-size:12px;line-height:20px;color:#8e8e8e;letter-spacing:1.5px;">自定义</span>
<span class="t" style="left:1309px;top:223.1px;font-size:10.4px;line-height:20px;color:#4f94e6;letter-spacing:0.0px;">E:\PR_T_XPORT\DJI_20251102150302_0008_D.mp4</span>
<span class="t" style="left:1583.6px;top:223.2px;font-size:12px;line-height:20px;color:#4f94e6;letter-spacing:2.4px;">完成</span>
<svg style="left:1684px;top:225.5px;" width="16" height="14" viewBox="0 0 16 14"><path d="M1.2 8 L6 12.3 L14.6 1.2" fill="none" stroke="#25a825" stroke-width="2.4"/></svg>
<svg style="left:867.25px;top:261.65px;" width="12.1" height="8.1" viewBox="0 0 12.1 8.1"><path d="M2 2 L6.05 6.1 L10.1 2" fill="none" stroke="#e8e8e8" stroke-width="2.3" stroke-linecap="round" stroke-linejoin="round"/></svg>
<div style="left:892px;top:257.8px;width:16px;height:15.6px;background:#00005b;border-radius:2.5px"></div>
<span class="t" style="left:894.6px;top:256.5px;font-size:10.5px;line-height:20px;color:#a5a5ff;letter-spacing:-0.2px;">Pr</span>
<span class="t" style="left:918.3px;top:256.9px;font-size:10.8px;line-height:20px;color:#e6e6e6;letter-spacing:-0.27px;">DJI_20251102150302_0008_D</span>
<div style="left:888px;top:287px;width:24px;height:24px;background:#383838;border-radius:4px"></div>
<svg style="left:894.0px;top:294.8px;" width="12" height="8.4" viewBox="0 0 12 8.4"><path d="M2 2 L6.0 6.4 L10 2" fill="none" stroke="#7d7d7d" stroke-width="2" stroke-linecap="round" stroke-linejoin="round"/></svg>
<span class="t" style="left:920.3px;top:289.3px;font-size:10.5px;line-height:20px;color:#8e8e8e;letter-spacing:-0.04px;">H.264</span>
<div style="left:1042px;top:287px;width:24px;height:24px;background:#383838;border-radius:4px"></div>
<svg style="left:1048.0px;top:294.8px;" width="12" height="8.4" viewBox="0 0 12 8.4"><path d="M2 2 L6.0 6.4 L10 2" fill="none" stroke="#7d7d7d" stroke-width="2" stroke-linecap="round" stroke-linejoin="round"/></svg>
<span class="t" style="left:1075px;top:289.4px;font-size:12px;line-height:20px;color:#8e8e8e;letter-spacing:1.5px;">自定义</span>
<span class="t" style="left:1309px;top:289.1px;font-size:10.4px;line-height:20px;color:#4f94e6;letter-spacing:0.0px;">E:\PR_T..._20251102150302_0008_D_1_30Mbsp.mp4</span>
<span class="t" style="left:1583.6px;top:289.2px;font-size:12px;line-height:20px;color:#4f94e6;letter-spacing:2.4px;">完成</span>
<svg style="left:1684px;top:291.5px;" width="16" height="14" viewBox="0 0 16 14"><path d="M1.2 8 L6 12.3 L14.6 1.2" fill="none" stroke="#25a825" stroke-width="2.4"/></svg>
<div style="left:637px;top:414px;width:1300px;height:584.6px;background:#fff;box-shadow:0 0 6px rgba(0,0,0,0.5)"></div>
<svg style="left:647px;top:424.5px;" width="14" height="10" viewBox="0 0 14 10"><path d="M1.5 0.5 H12.5 L14 5 H0 Z" fill="#c8ccd0"/><rect x="0" y="4.6" width="14" height="5" rx="0.8" fill="#55595e"/><rect x="10.3" y="6.4" width="2.2" height="1.6" fill="#3fd34a"/></svg>
<div style="left:669px;top:423px;width:1px;height:11px;background:#c4c4c4"></div>
<svg style="left:681px;top:422px;" width="13" height="16" viewBox="0 0 13 16"><path d="M0.5 0.5 H9 L12.5 4 V15.5 H0.5 Z" fill="#fff" stroke="#8e8e8e" stroke-width="1"/><path d="M9 0.5 V4 H12.5" fill="none" stroke="#8e8e8e" stroke-width="0.8"/><path d="M3 8.5 L5.6 11.2 L10 5.4" fill="none" stroke="#e8532a" stroke-width="1.5"/></svg>
<svg style="left:703px;top:422.5px;" width="13" height="15" viewBox="0 0 13 15"><defs><linearGradient id="xf" x1="0" y1="0" x2="1" y2="0"><stop offset="0" stop-color="#ffedb0"/><stop offset="1" stop-color="#ffe08a"/></linearGradient></defs><path d="M0 0.3 H11.8 V8.6 H13 V15 H0 Z" fill="url(#xf)"/><path d="M10.3 9 H12.7 V14.6 H10.3 Z" fill="#ffe494" stroke="#f2cf72" stroke-width="0.6"/><rect x="0" y="14.2" width="13" height="0.8" fill="#f0cb68"/></svg>
<svg style="left:724px;top:428px;" width="8" height="6" viewBox="0 0 8 6"><rect x="0.5" y="0" width="7" height="1.2" fill="#222"/><path d="M0.5 2.5 H7.5 L4 6 Z" fill="#222"/></svg>
<div style="left:739px;top:423px;width:1px;height:11px;background:#c4c4c4"></div>
<span class="t" style="left:746.7px;top:419.6px;font-size:12px;line-height:20px;color:#000;letter-spacing:-0.04px;">通用库 (E:)</span>
<div style="left:1819px;top:429px;width:10px;height:1.3px;background:#111"></div>
<svg style="left:1864px;top:424px;" width="10" height="10" viewBox="0 0 10 10"><rect x="0.6" y="0.6" width="8.8" height="8.8" fill="none" stroke="#111" stroke-width="1.2"/></svg>
<svg style="left:1909.5px;top:424px;" width="10" height="10" viewBox="0 0 10 10"><path d="M0.5 0.5 L9.5 9.5 M9.5 0.5 L0.5 9.5" stroke="#111" stroke-width="1.2"/></svg>
<div style="left:638px;top:445px;width:56px;height:23px;background:#0c63b6"></div>
<span class="t" style="left:466px;width:400px;text-align:center;top:447.8px;font-size:12px;line-height:20px;color:#fff;letter-spacing:0.4px;"><span>文件</span></span>
<span class="t" style="left:708px;top:447.5px;font-size:12px;line-height:20px;color:#2b2b2b;letter-spacing:0.4px;">主页</span>
<span class="t" style="left:761px;top:447.5px;font-size:12px;line-height:20px;color:#2b2b2b;letter-spacing:0.4px;">共享</span>
<span class="t" style="left:814px;top:447.5px;font-size:12px;line-height:20px;color:#2b2b2b;letter-spacing:0.4px;">查看</span>
<svg style="left:1900.5px;top:455.5px;" width="9" height="6" viewBox="0 0 9 6"><path d="M0.6 0.8 L4.5 4.8 L8.4 0.8" fill="none" stroke="#9a9a9a" stroke-width="1.1"/></svg>
<div style="left:638px;top:471px;width:1274px;height:1px;background:#dcdcdc"></div>
<svg style="left:650px;top:482.7px;" width="14" height="12" viewBox="0 0 14 12"><path d="M13.5 6 H1.2 M6.2 0.8 L1 6 L6.2 11.2" fill="none" stroke="#6a6a6a" stroke-width="1.5"/></svg>
<svg style="left:680px;top:482.7px;" width="14" height="12" viewBox="0 0 14 12"><path d="M0.5 6 H12.8 M7.8 0.8 L13 6 L7.8 11.2" fill="none" stroke="#c9c9c9" stroke-width="1.5"/></svg>
<svg style="left:706.5px;top:486px;" width="8" height="5" viewBox="0 0 8 5"><path d="M0.6 0.6 L4 4 L7.4 0.6" fill="none" stroke="#8a8a8a" stroke-width="1.2"/></svg>
<svg style="left:724.5px;top:482px;" width="13" height="14" viewBox="0 0 13 14"><path d="M6.5 13.5 V1.2 M1 6.5 L6.5 1 L12 6.5" fill="none" stroke="#6a6a6a" stroke-width="1.5"/></svg>
<div style="left:744px;top:477px;width:950px;height:20.5px;border:1px solid #d9d9d9;background:#fff"></div>
<div style="left:1694px;top:477px;width:17px;height:20.5px;border:1px solid #d9d9d9;background:#fff"></div>
<svg style="left:748px;top:484.5px;" width="14" height="10" viewBox="0 0 14 10"><path d="M1.5 0.5 H12.5 L14 5 H0 Z" fill="#c8ccd0"/><rect x="0" y="4.6" width="14" height="5" rx="0.8" fill="#55595e"/><rect x="10.3" y="6.4" width="2.2" height="1.6" fill="#3fd34a"/></svg>
<svg style="left:770.5px;top:485px;" width="5" height="8" viewBox="0 0 5 8"><path d="M0.8 0.8 L4 4 L0.8 7.2" fill="none" stroke="#7a7a7a" stroke-width="1.2"/></svg>
<span class="t" style="left:786.3px;top:478.3px;font-size:12.5px;line-height:20px;color:#000;letter-spacing:0.62px;">dai</span>
<svg style="left:813.5px;top:485px;" width="5" height="8" viewBox="0 0 5 8"><path d="M0.8 0.8 L4 4 L0.8 7.2" fill="none" stroke="#7a7a7a" stroke-width="1.2"/></svg>
<span class="t" style="left:829.2px;top:478.5px;font-size:12px;line-height:20px;color:#000;letter-spacing:-0.11px;">通用库 (E:)</span>
<svg style="left:1682.5px;top:485.5px;" width="10" height="6" viewBox="0 0 10 6"><path d="M0.8 0.8 L5 5 L9.2 0.8" fill="none" stroke="#555" stroke-width="1.5"/></svg>
<svg style="left:1698px;top:482.5px;" width="12" height="13" viewBox="0 0 12 13"><path d="M9.6 3.4 A4.6 4.6 0 1 1 5.2 2" fill="none" stroke="#6a6a6a" stroke-width="1.4"/><path d="M3.8 0 L7.2 1.9 L4.2 4.4 Z" fill="#6a6a6a"/></svg>
<div style="left:1724px;top:477px;width:200px;height:20.5px;border:1px solid #d9d9d9;background:#fff"></div>
<span class="t" style="left:1734.3px;top:479.0px;font-size:12px;line-height:20px;color:#6d6d6d;letter-spacing:0.04px;">在 通用库 (E:) 中搜索</span>
<svg style="left:1906px;top:482px;" width="12" height="13" viewBox="0 0 12 13"><circle cx="8" cy="4.6" r="3.6" fill="none" stroke="#6a6a6a" stroke-width="1.4"/><path d="M5.4 7.4 L0.8 12" stroke="#6a6a6a" stroke-width="1.8"/></svg>
<svg style="left:663px;top:527.5px;" width="16" height="14" viewBox="0 0 16 14"><path d="M9.5 0.5 L11.4 4.8 L15.8 5.3 L12.5 8.3 L13.5 12.8 L9.5 10.5 L5.6 12.8 L6.5 8.3 L3.3 5.3 L7.6 4.8 Z" fill="#2c8ee8"/><path d="M0.5 6 L3.6 7 M0.2 9.4 L4.2 9 M2 12.8 L5 11" stroke="#5aa9ee" stroke-width="1.1"/></svg>
<span class="t" style="left:682.7px;top:524.6px;font-size:12px;line-height:20px;color:#000;letter-spacing:0.03px;">快速访问</span>
<svg style="left:670px;top:552.9px;" width="16" height="12" viewBox="0 0 16 12"><defs><linearGradient id="dk" x1="0" y1="0" x2="1" y2="1"><stop offset="0" stop-color="#2f9bf0"/><stop offset="1" stop-color="#1b7fdc"/></linearGradient></defs><rect x="0" y="0" width="16" height="11.5" rx="0.8" fill="url(#dk)"/><rect x="0.8" y="9.3" width="14.4" height="1" fill="#0f5fb8"/><rect x="1.2" y="10" width="1.2" height="0.9" fill="#e8f4ff"/><rect x="13.6" y="10" width="1.2" height="0.9" fill="#e8f4ff"/></svg>
<span class="t" style="left:690.8px;top:548.7px;font-size:12px;line-height:20px;color:#000;letter-spacing:0.4px;">桌面</span>
<svg style="left:928.8px;top:554.4px;" width="11" height="11" viewBox="0 0 11 11"><g transform="rotate(45 5.5 5.5)" fill="#8a8a8a"><rect x="3.6" y="-0.5" width="3.8" height="5.2"/><rect x="2.2" y="4.3" width="6.6" height="1.6"/><rect x="5" y="5.9" width="1" height="5"/></g></svg>
<svg style="left:670px;top:574.5px;" width="16" height="17" viewBox="0 0 16 17"><path d="M5.3 0 H10.7 V8 H16 L8 16.6 L0 8 H5.3 Z" fill="#2f83d8"/><path d="M5.3 0 H10.7 V3 H5.3 Z" fill="#4a9ae6"/></svg>
<span class="t" style="left:690.8px;top:572.7px;font-size:12px;line-height:20px;color:#000;letter-spacing:0.4px;">下载</span>
<svg style="left:928.8px;top:578.4px;" width="11" height="11" viewBox="0 0 11 11"><g transform="rotate(45 5.5 5.5)" fill="#8a8a8a"><rect x="3.6" y="-0.5" width="3.8" height="5.2"/><rect x="2.2" y="4.3" width="6.6" height="1.6"/><rect x="5" y="5.9" width="1" height="5"/></g></svg>
<svg style="left:672px;top:598.9px;" width="12" height="16" viewBox="0 0 12 16"><path d="M0.5 0.5 H8.5 L11.5 3.5 V15.5 H0.5 Z" fill="#fff" stroke="#8e8e8e" stroke-width="1"/><path d="M8.5 0.5 V3.5 H11.5" fill="none" stroke="#8e8e8e" stroke-width="0.8"/><g fill="#3b8ad9"><rect x="2.5" y="4" width="5" height="1"/><rect x="2.5" y="6.2" width="7" height="1"/><rect x="2.5" y="8.4" width="7" height="1"/></g><g fill="#9a9a9a"><rect x="2.5" y="10.6" width="7" height="1"/><rect x="2.5" y="12.8" width="7" height="1"/></g><rect x="4" y="2" width="2" height="1.2" fill="#3b8ad9"/></svg>
<span class="t" style="left:690.8px;top:596.7px;font-size:12px;line-height:20px;color:#000;letter-spacing:0.4px;">文档</span>
<svg style="left:928.8px;top:602.4px;" width="11" height="11" viewBox="0 0 11 11"><g transform="rotate(45 5.5 5.5)" fill="#8a8a8a"><rect x="3.6" y="-0.5" width="3.8" height="5.2"/><rect x="2.2" y="4.3" width="6.6" height="1.6"/><rect x="5" y="5.9" width="1" height="5"/></g></svg>
<svg style="left:670px;top:625.0px;" width="16" height="12" viewBox="0 0 16 12"><rect x="0.5" y="0.5" width="15" height="11" fill="#f4f4f4" stroke="#9a9a9a" stroke-width="1"/><rect x="2" y="2" width="12" height="8" fill="#cfe6f7"/><path d="M2 7 C5 4.5 8 5.5 14 7.5 V10 H2 Z" fill="#3d6f4a"/><path d="M2 8.3 C6 7 10 8 14 9 V10 H2 Z" fill="#22455a"/></svg>
<span class="t" style="left:690.8px;top:620.8px;font-size:12px;line-height:20px;color:#000;letter-spacing:0.4px;">图片</span>
<svg style="left:928.8px;top:626.5px;" width="11" height="11" viewBox="0 0 11 11"><g transform="rotate(45 5.5 5.5)" fill="#8a8a8a"><rect x="3.6" y="-0.5" width="3.8" height="5.2"/><rect x="2.2" y="4.3" width="6.6" height="1.6"/><rect x="5" y="5.9" width="1" height="5"/></g></svg>
<svg style="left:672px;top:647.2px;" width="13" height="15" viewBox="0 0 13 15"><defs><linearGradient id="xf" x1="0" y1="0" x2="1" y2="0"><stop offset="0" stop-color="#ffedb0"/><stop offset="1" stop-color="#ffe08a"/></linearGradient></defs><path d="M0 0.3 H11.8 V8.6 H13 V15 H0 Z" fill="url(#xf)"/><path d="M10.3 9 H12.7 V14.6 H10.3 Z" fill="#ffe494" stroke="#f2cf72" stroke-width="0.6"/><rect x="0" y="14.2" width="13" height="0.8" fill="#f0cb68"/></svg>
<span class="t" style="left:691.4px;top:644.8px;font-size:12.5px;line-height:20px;color:#000;letter-spacing:-0.25px;">IMG_OUT</span>
<svg style="left:928.8px;top:650.5px;" width="11" height="11" viewBox="0 0 11 11"><g transform="rotate(45 5.5 5.5)" fill="#8a8a8a"><rect x="3.6" y="-0.5" width="3.8" height="5.2"/><rect x="2.2" y="4.3" width="6.6" height="1.6"/><rect x="5" y="5.9" width="1" height="5"/></g></svg>
<svg style="left:672px;top:671.2px;" width="13" height="15" viewBox="0 0 13 15"><defs><linearGradient id="xf" x1="0" y1="0" x2="1" y2="0"><stop offset="0" stop-color="#ffedb0"/><stop offset="1" stop-color="#ffe08a"/></linearGradient></defs><path d="M0 0.3 H11.8 V8.6 H13 V15 H0 Z" fill="url(#xf)"/><path d="M10.3 9 H12.7 V14.6 H10.3 Z" fill="#ffe494" stroke="#f2cf72" stroke-width="0.6"/><rect x="0" y="14.2" width="13" height="0.8" fill="#f0cb68"/></svg>
<span class="t" style="left:691.4px;top:668.8px;font-size:12.5px;line-height:20px;color:#000;letter-spacing:0.69px;">product</span>
<svg style="left:928.8px;top:674.5px;" width="11" height="11" viewBox="0 0 11 11"><g transform="rotate(45 5.5 5.5)" fill="#8a8a8a"><rect x="3.6" y="-0.5" width="3.8" height="5.2"/><rect x="2.2" y="4.3" width="6.6" height="1.6"/><rect x="5" y="5.9" width="1" height="5"/></g></svg>
<svg style="left:672px;top:695.2px;" width="13" height="15" viewBox="0 0 13 15"><defs><linearGradient id="xf" x1="0" y1="0" x2="1" y2="0"><stop offset="0" stop-color="#ffedb0"/><stop offset="1" stop-color="#ffe08a"/></linearGradient></defs><path d="M0 0.3 H11.8 V8.6 H13 V15 H0 Z" fill="url(#xf)"/><path d="M10.3 9 H12.7 V14.6 H10.3 Z" fill="#ffe494" stroke="#f2cf72" stroke-width="0.6"/><rect x="0" y="14.2" width="13" height="0.8" fill="#f0cb68"/></svg>
<span class="t" style="left:691.4px;top:692.8px;font-size:12.5px;line-height:20px;color:#000;letter-spacing:-0.52px;">IMG_VIDEO_RECORD</span>
<svg style="left:928.8px;top:698.5px;" width="11" height="11" viewBox="0 0 11 11"><g transform="rotate(45 5.5 5.5)" fill="#8a8a8a"><rect x="3.6" y="-0.5" width="3.8" height="5.2"/><rect x="2.2" y="4.3" width="6.6" height="1.6"/><rect x="5" y="5.9" width="1" height="5"/></g></svg>
<svg style="left:672px;top:719.2px;" width="13" height="15" viewBox="0 0 13 15"><defs><linearGradient id="xf" x1="0" y1="0" x2="1" y2="0"><stop offset="0" stop-color="#ffedb0"/><stop offset="1" stop-color="#ffe08a"/></linearGradient></defs><path d="M0 0.3 H11.8 V8.6 H13 V15 H0 Z" fill="url(#xf)"/><path d="M10.3 9 H12.7 V14.6 H10.3 Z" fill="#ffe494" stroke="#f2cf72" stroke-width="0.6"/><rect x="0" y="14.2" width="13" height="0.8" fill="#f0cb68"/></svg>
<span class="t" style="left:691.4px;top:716.8px;font-size:12.5px;line-height:20px;color:#000;letter-spacing:0.49px;">models</span>
<svg style="left:928.8px;top:722.5px;" width="11" height="11" viewBox="0 0 11 11"><g transform="rotate(45 5.5 5.5)" fill="#8a8a8a"><rect x="3.6" y="-0.5" width="3.8" height="5.2"/><rect x="2.2" y="4.3" width="6.6" height="1.6"/><rect x="5" y="5.9" width="1" height="5"/></g></svg>
<svg style="left:661.5px;top:752.5px;" width="17" height="11" viewBox="0 0 17 11"><defs><linearGradient id="od" x1="0" y1="0" x2="1" y2="0"><stop offset="0" stop-color="#1268d3"/><stop offset="1" stop-color="#35a2f4"/></linearGradient></defs><path d="M4 10.8 C0.8 10.8 -0.2 6.6 3 5.6 C3 2.6 6.6 1.2 8.6 3.2 C10.6 0 15 1.6 14.6 5.2 C17.6 5.6 17.4 10.8 14.2 10.8 Z" fill="url(#od)"/></svg>
<span class="t" style="left:683.1px;top:748.8px;font-size:12.5px;line-height:20px;color:#000;letter-spacing:0.2px;">OneDrive - Personal</span>
<svg style="left:661.5px;top:783.5px;" width="17" height="15" viewBox="0 0 17 15"><rect x="0.6" y="0.6" width="15.8" height="10" fill="#3fb4f2" stroke="#4a6a86" stroke-width="1"/><rect x="1.6" y="1.6" width="13.8" height="8" fill="#57c4f7"/><rect x="6.5" y="11" width="4" height="1.6" fill="#7e8e9a"/><rect x="3" y="12.8" width="11" height="1.3" fill="#9aa8b2"/></svg>
<span class="t" style="left:683.1px;top:780.5px;font-size:12.5px;line-height:20px;color:#000;letter-spacing:0.53px;">dai</span>
<svg style="left:669.5px;top:806.7px;" width="17" height="17" viewBox="0 0 17 17"><path d="M8.5 0.5 L16.5 3.8 V12.8 L8.5 16.5 L0.5 12.8 V3.8 Z" fill="#3cc6d6"/><path d="M8.5 0.5 L16.5 3.8 L8.5 7.4 L0.5 3.8 Z" fill="#9ae8ee"/><path d="M8.5 7.4 L16.5 3.8 V12.8 L8.5 16.5 Z" fill="#1b9db4"/></svg>
<span class="t" style="left:690.7px;top:805.2px;font-size:12px;line-height:20px;color:#000;letter-spacing:0.28px;">3D 对象</span>
<svg style="left:670.5px;top:831.1px;" width="14" height="16" viewBox="0 0 14 16"><rect x="0" y="0" width="14" height="16" fill="#3a3a3a"/><rect x="3" y="1" width="8" height="6.4" fill="#5a7bd0"/><rect x="3" y="8.6" width="8" height="6.4" fill="#d0883a"/><rect x="4.5" y="3" width="3" height="3" fill="#e8c24a"/><rect x="6" y="10" width="3.5" height="3" fill="#4a8ad6"/><g fill="#e8e8e8"><rect x="0.7" y="1" width="1.4" height="1.6"/><rect x="0.7" y="4.2" width="1.4" height="1.6"/><rect x="0.7" y="7.4" width="1.4" height="1.6"/><rect x="0.7" y="10.6" width="1.4" height="1.6"/><rect x="0.7" y="13.6" width="1.4" height="1.6"/><rect x="11.9" y="1" width="1.4" height="1.6"/><rect x="11.9" y="4.2" width="1.4" height="1.6"/><rect x="11.9" y="7.4" width="1.4" height="1.6"/><rect x="11.9" y="10.6" width="1.4" height="1.6"/><rect x="11.9" y="13.6" width="1.4" height="1.6"/></g></svg>
<span class="t" style="left:690.7px;top:829.1px;font-size:12px;line-height:20px;color:#000;letter-spacing:0.4px;">视频</span>
<svg style="left:670px;top:857.2px;" width="16" height="12" viewBox="0 0 16 12"><rect x="0.5" y="0.5" width="15" height="11" fill="#f4f4f4" stroke="#9a9a9a" stroke-width="1"/><rect x="2" y="2" width="12" height="8" fill="#cfe6f7"/><path d="M2 7 C5 4.5 8 5.5 14 7.5 V10 H2 Z" fill="#3d6f4a"/><path d="M2 8.3 C6 7 10 8 14 9 V10 H2 Z" fill="#22455a"/></svg>
<span class="t" style="left:690.7px;top:853.0px;font-size:12px;line-height:20px;color:#000;letter-spacing:0.4px;">图片</span>
<svg style="left:672px;top:879.2px;" width="12" height="16" viewBox="0 0 12 16"><path d="M0.5 0.5 H8.5 L11.5 3.5 V15.5 H0.5 Z" fill="#fff" stroke="#8e8e8e" stroke-width="1"/><path d="M8.5 0.5 V3.5 H11.5" fill="none" stroke="#8e8e8e" stroke-width="0.8"/><g fill="#3b8ad9"><rect x="2.5" y="4" width="5" height="1"/><rect x="2.5" y="6.2" width="7" height="1"/><rect x="2.5" y="8.4" width="7" height="1"/></g><g fill="#9a9a9a"><rect x="2.5" y="10.6" width="7" height="1"/><rect x="2.5" y="12.8" width="7" height="1"/></g><rect x="4" y="2" width="2" height="1.2" fill="#3b8ad9"/></svg>
<span class="t" style="left:690.7px;top:877.0px;font-size:12px;line-height:20px;color:#000;letter-spacing:0.4px;">文档</span>
<svg style="left:670px;top:902.8px;" width="16" height="17" viewBox="0 0 16 17"><path d="M5.3 0 H10.7 V8 H16 L8 16.6 L0 8 H5.3 Z" fill="#2f83d8"/><path d="M5.3 0 H10.7 V3 H5.3 Z" fill="#4a9ae6"/></svg>
<span class="t" style="left:690.7px;top:901.0px;font-size:12px;line-height:20px;color:#000;letter-spacing:0.4px;">下载</span>
<svg style="left:672px;top:926.5px;" width="12" height="17" viewBox="0 0 12 17"><ellipse cx="3.8" cy="13.2" rx="3.6" ry="3" fill="#2a93ea"/><rect x="5.6" y="0.8" width="1.8" height="12.6" fill="#2a93ea"/><path d="M6 0.5 C7 3.5 11.5 5 10.5 10.5 C10.5 7 8.5 6 6 5.5 Z" fill="#2a93ea"/></svg>
<span class="t" style="left:690.7px;top:925.0px;font-size:12px;line-height:20px;color:#000;letter-spacing:0.4px;">音乐</span>
<svg style="left:670px;top:953.2px;" width="16" height="12" viewBox="0 0 16 12"><defs><linearGradient id="dk" x1="0" y1="0" x2="1" y2="1"><stop offset="0" stop-color="#2f9bf0"/><stop offset="1" stop-color="#1b7fdc"/></linearGradient></defs><rect x="0" y="0" width="16" height="11.5" rx="0.8" fill="url(#dk)"/><rect x="0.8" y="9.3" width="14.4" height="1" fill="#0f5fb8"/><rect x="1.2" y="10" width="1.2" height="0.9" fill="#e8f4ff"/><rect x="13.6" y="10" width="1.2" height="0.9" fill="#e8f4ff"/></svg>
<span class="t" style="left:690.7px;top:949.0px;font-size:12px;line-height:20px;color:#000;letter-spacing:0.4px;">桌面</span>
<div style="left:943px;top:507px;width:16px;height:468px;background:#f0f0f0"></div>
<div style="left:943px;top:524px;width:16px;height:321px;background:#c6c6c6"></div>
<svg style="left:946.5px;top:513px;" width="9" height="6" viewBox="0 0 9 6"><path d="M0.8 5.2 L4.5 1.4 L8.2 5.2" fill="none" stroke="#505050" stroke-width="1.6"/></svg>
<svg style="left:946.5px;top:964px;" width="9" height="6" viewBox="0 0 9 6"><path d="M0.8 0.8 L4.5 4.6 L8.2 0.8" fill="none" stroke="#505050" stroke-width="1.6"/></svg>
<div style="left:961px;top:507px;width:1px;height:468px;background:#f0f0f0"></div>
<span class="t" style="left:979.8px;top:511.4px;font-size:12px;line-height:20px;color:#4c607a;letter-spacing:0.8px;">名称</span>
<svg style="left:1100.5px;top:507px;" width="9" height="5" viewBox="0 0 9 5"><path d="M0.6 4.4 L4.5 0.7 L8.4 4.4" fill="none" stroke="#9a9a9a" stroke-width="1"/></svg>
<div style="left:1234px;top:507px;width:1px;height:27px;background:#e5e5e5"></div>
<div style="left:1378px;top:507px;width:1px;height:27px;background:#e5e5e5"></div>
<div style="left:1498px;top:507px;width:1px;height:27px;background:#e5e5e5"></div>
<div style="left:1578px;top:507px;width:1px;height:27px;background:#e5e5e5"></div>
<span class="t" style="left:1241.1px;top:511.4px;font-size:12px;line-height:20px;color:#4c607a;letter-spacing:0.13px;">修改日期</span>
<span class="t" style="left:1384.8px;top:511.4px;font-size:12px;line-height:20px;color:#4c607a;letter-spacing:0.4px;">类型</span>
<span class="t" style="left:1504.4px;top:511.4px;font-size:12px;line-height:20px;color:#4c607a;letter-spacing:0.4px;">大小</span>
<div style="left:977px;top:687px;width:597px;height:20.5px;background:#cce8ff;border:1px solid #99d1ff"></div>
<svg style="left:983px;top:542.4px;" width="13" height="15" viewBox="0 0 13 15"><defs><linearGradient id="xf" x1="0" y1="0" x2="1" y2="0"><stop offset="0" stop-color="#ffedb0"/><stop offset="1" stop-color="#ffe08a"/></linearGradient></defs><path d="M0 0.3 H11.8 V8.6 H13 V15 H0 Z" fill="url(#xf)"/><path d="M10.3 9 H12.7 V14.6 H10.3 Z" fill="#ffe494" stroke="#f2cf72" stroke-width="0.6"/><rect x="0" y="14.2" width="13" height="0.8" fill="#f0cb68"/></svg>
<span class="t" style="left:1001.4px;top:541.0px;font-size:12.5px;line-height:20px;color:#000;letter-spacing:0.4px;">BenchMark</span>
<span class="t" style="left:1241px;top:541.0px;font-size:12.5px;line-height:20px;color:#6d6d6d;letter-spacing:0.29px;">2025/4/18 1:04</span>
<span class="t" style="left:1384.8px;top:541.0px;font-size:12px;line-height:20px;color:#6d6d6d;letter-spacing:0.2px;">文件夹</span>
<svg style="left:983px;top:563.4px;" width="13" height="15" viewBox="0 0 13 15"><defs><linearGradient id="xf" x1="0" y1="0" x2="1" y2="0"><stop offset="0" stop-color="#ffedb0"/><stop offset="1" stop-color="#ffe08a"/></linearGradient></defs><path d="M0 0.3 H11.8 V8.6 H13 V15 H0 Z" fill="url(#xf)"/><path d="M10.3 9 H12.7 V14.6 H10.3 Z" fill="#ffe494" stroke="#f2cf72" stroke-width="0.6"/><rect x="0" y="14.2" width="13" height="0.8" fill="#f0cb68"/></svg>
<span class="t" style="left:1001.4px;top:562.0px;font-size:12.5px;line-height:20px;color:#000;letter-spacing:0.12px;">Calibre_Books</span>
<span class="t" style="left:1241px;top:562.0px;font-size:12.5px;line-height:20px;color:#6d6d6d;letter-spacing:0.28px;">2025/9/25 23:47</span>
<span class="t" style="left:1384.8px;top:562.0px;font-size:12px;line-height:20px;color:#6d6d6d;letter-spacing:0.2px;">文件夹</span>
<svg style="left:983px;top:584.4px;" width="13" height="15" viewBox="0 0 13 15"><defs><linearGradient id="xf" x1="0" y1="0" x2="1" y2="0"><stop offset="0" stop-color="#ffedb0"/><stop offset="1" stop-color="#ffe08a"/></linearGradient></defs><path d="M0 0.3 H11.8 V8.6 H13 V15 H0 Z" fill="url(#xf)"/><path d="M10.3 9 H12.7 V14.6 H10.3 Z" fill="#ffe494" stroke="#f2cf72" stroke-width="0.6"/><rect x="0" y="14.2" width="13" height="0.8" fill="#f0cb68"/></svg>
<span class="t" style="left:1001.4px;top:583.0px;font-size:12.5px;line-height:20px;color:#000;letter-spacing:0.52px;">game</span>
<span class="t" style="left:1241px;top:583.0px;font-size:12.5px;line-height:20px;color:#6d6d6d;letter-spacing:0.29px;">2025/6/9 19:09</span>
<span class="t" style="left:1384.8px;top:583.0px;font-size:12px;line-height:20px;color:#6d6d6d;letter-spacing:0.2px;">文件夹</span>
<svg style="left:983px;top:605.4px;" width="13" height="15" viewBox="0 0 13 15"><defs><linearGradient id="xf" x1="0" y1="0" x2="1" y2="0"><stop offset="0" stop-color="#ffedb0"/><stop offset="1" stop-color="#ffe08a"/></linearGradient></defs><path d="M0 0.3 H11.8 V8.6 H13 V15 H0 Z" fill="url(#xf)"/><path d="M10.3 9 H12.7 V14.6 H10.3 Z" fill="#ffe494" stroke="#f2cf72" stroke-width="0.6"/><rect x="0" y="14.2" width="13" height="0.8" fill="#f0cb68"/></svg>
<span class="t" style="left:1001.4px;top:604.0px;font-size:12.5px;line-height:20px;color:#000;letter-spacing:0.09px;">huge_resources</span>
<span class="t" style="left:1241px;top:604.0px;font-size:12.5px;line-height:20px;color:#6d6d6d;letter-spacing:0.29px;">2025/2/6 18:57</span>
<span class="t" style="left:1384.8px;top:604.0px;font-size:12px;line-height:20px;color:#6d6d6d;letter-spacing:0.2px;">文件夹</span>
<svg style="left:983px;top:626.4px;" width="13" height="15" viewBox="0 0 13 15"><defs><linearGradient id="xf" x1="0" y1="0" x2="1" y2="0"><stop offset="0" stop-color="#ffedb0"/><stop offset="1" stop-color="#ffe08a"/></linearGradient></defs><path d="M0 0.3 H11.8 V8.6 H13 V15 H0 Z" fill="url(#xf)"/><path d="M10.3 9 H12.7 V14.6 H10.3 Z" fill="#ffe494" stroke="#f2cf72" stroke-width="0.6"/><rect x="0" y="14.2" width="13" height="0.8" fill="#f0cb68"/></svg>
<span class="t" style="left:1001.4px;top:625.0px;font-size:12.5px;line-height:20px;color:#000;letter-spacing:-0.52px;">IMG_VIDEO_RECORD</span>
<span class="t" style="left:1241px;top:625.0px;font-size:12.5px;line-height:20px;color:#6d6d6d;letter-spacing:0.33px;">2025/10/11 22:50</span>
<span class="t" style="left:1384.8px;top:625.0px;font-size:12px;line-height:20px;color:#6d6d6d;letter-spacing:0.2px;">文件夹</span>
<svg style="left:983px;top:647.4px;" width="13" height="15" viewBox="0 0 13 15"><defs><linearGradient id="xf" x1="0" y1="0" x2="1" y2="0"><stop offset="0" stop-color="#ffedb0"/><stop offset="1" stop-color="#ffe08a"/></linearGradient></defs><path d="M0 0.3 H11.8 V8.6 H13 V15 H0 Z" fill="url(#xf)"/><path d="M10.3 9 H12.7 V14.6 H10.3 Z" fill="#ffe494" stroke="#f2cf72" stroke-width="0.6"/><rect x="0" y="14.2" width="13" height="0.8" fill="#f0cb68"/></svg>
<span class="t" style="left:1001.4px;top:646.0px;font-size:12.5px;line-height:20px;color:#000;letter-spacing:-1.44px;">LRC</span>
<span class="t" style="left:1241px;top:646.0px;font-size:12.5px;line-height:20px;color:#6d6d6d;letter-spacing:0.28px;">2025/6/23 21:04</span>
<span class="t" style="left:1384.8px;top:646.0px;font-size:12px;line-height:20px;color:#6d6d6d;letter-spacing:0.2px;">文件夹</span>
<svg style="left:983px;top:668.4px;" width="13" height="15" viewBox="0 0 13 15"><path d="M0 0.3 H11 V10 H13 V15 H0 Z" fill="#fff4cf"/><path d="M11 10.5 H13 V15 H10.3 V11.4 Z" fill="#f6e0a6"/></svg>
<span class="t" style="left:1001.4px;top:667.0px;font-size:12.5px;line-height:20px;color:#000;letter-spacing:0.56px;">pix-worker</span>
<span class="t" style="left:1241px;top:667.0px;font-size:12.5px;line-height:20px;color:#6d6d6d;letter-spacing:0.29px;">2025/7/14 0:33</span>
<span class="t" style="left:1384.8px;top:667.0px;font-size:12px;line-height:20px;color:#6d6d6d;letter-spacing:0.2px;">文件夹</span>
<svg style="left:983px;top:689.4px;" width="13" height="15" viewBox="0 0 13 15"><defs><linearGradient id="xf" x1="0" y1="0" x2="1" y2="0"><stop offset="0" stop-color="#ffedb0"/><stop offset="1" stop-color="#ffe08a"/></linearGradient></defs><path d="M0 0.3 H11.8 V8.6 H13 V15 H0 Z" fill="url(#xf)"/><path d="M10.3 9 H12.7 V14.6 H10.3 Z" fill="#ffe494" stroke="#f2cf72" stroke-width="0.6"/><rect x="0" y="14.2" width="13" height="0.8" fill="#f0cb68"/></svg>
<span class="t" style="left:1001.4px;top:688.0px;font-size:12.5px;line-height:20px;color:#000;letter-spacing:-0.93px;">PR_TMP</span>
<span class="t" style="left:1241px;top:688.0px;font-size:12.5px;line-height:20px;color:#6d6d6d;letter-spacing:0.34px;">2025/11/4 20:22</span>
<span class="t" style="left:1384.8px;top:688.0px;font-size:12px;line-height:20px;color:#6d6d6d;letter-spacing:0.2px;">文件夹</span>
<svg style="left:983px;top:710.4px;" width="13" height="15" viewBox="0 0 13 15"><defs><linearGradient id="xf" x1="0" y1="0" x2="1" y2="0"><stop offset="0" stop-color="#ffedb0"/><stop offset="1" stop-color="#ffe08a"/></linearGradient></defs><path d="M0 0.3 H11.8 V8.6 H13 V15 H0 Z" fill="url(#xf)"/><path d="M10.3 9 H12.7 V14.6 H10.3 Z" fill="#ffe494" stroke="#f2cf72" stroke-width="0.6"/><rect x="0" y="14.2" width="13" height="0.8" fill="#f0cb68"/></svg>
<span class="t" style="left:1001.4px;top:709.0px;font-size:12.5px;line-height:20px;color:#000;letter-spacing:0.14px;">Program Files</span>
<span class="t" style="left:1241px;top:709.0px;font-size:12.5px;line-height:20px;color:#6d6d6d;letter-spacing:0.28px;">2025/4/27 19:09</span>
<span class="t" style="left:1384.8px;top:709.0px;font-size:12px;line-height:20px;color:#6d6d6d;letter-spacing:0.2px;">文件夹</span>
<svg style="left:983px;top:731.4px;" width="13" height="15" viewBox="0 0 13 15"><defs><linearGradient id="xf" x1="0" y1="0" x2="1" y2="0"><stop offset="0" stop-color="#ffedb0"/><stop offset="1" stop-color="#ffe08a"/></linearGradient></defs><path d="M0 0.3 H11.8 V8.6 H13 V15 H0 Z" fill="url(#xf)"/><path d="M10.3 9 H12.7 V14.6 H10.3 Z" fill="#ffe494" stroke="#f2cf72" stroke-width="0.6"/><rect x="0" y="14.2" width="13" height="0.8" fill="#f0cb68"/></svg>
<span class="t" style="left:1001.4px;top:730.0px;font-size:12.5px;line-height:20px;color:#000;letter-spacing:0.01px;">ProgramData</span>
<span class="t" style="left:1241px;top:730.0px;font-size:12.5px;line-height:20px;color:#6d6d6d;letter-spacing:0.28px;">2025/5/18 22:17</span>
<span class="t" style="left:1384.8px;top:730.0px;font-size:12px;line-height:20px;color:#6d6d6d;letter-spacing:0.2px;">文件夹</span>
<svg style="left:983px;top:752.4px;" width="13" height="15" viewBox="0 0 13 15"><defs><linearGradient id="xf" x1="0" y1="0" x2="1" y2="0"><stop offset="0" stop-color="#ffedb0"/><stop offset="1" stop-color="#ffe08a"/></linearGradient></defs><path d="M0 0.3 H11.8 V8.6 H13 V15 H0 Z" fill="url(#xf)"/><path d="M10.3 9 H12.7 V14.6 H10.3 Z" fill="#ffe494" stroke="#f2cf72" stroke-width="0.6"/><rect x="0" y="14.2" width="13" height="0.8" fill="#f0cb68"/></svg>
<span class="t" style="left:1001.4px;top:751.0px;font-size:12.5px;line-height:20px;color:#000;letter-spacing:0.14px;">video</span>
<span class="t" style="left:1241px;top:751.0px;font-size:12.5px;line-height:20px;color:#6d6d6d;letter-spacing:0.33px;">2024/11/25 21:00</span>
<span class="t" style="left:1384.8px;top:751.0px;font-size:12px;line-height:20px;color:#6d6d6d;letter-spacing:0.2px;">文件夹</span>
<svg style="left:983px;top:773.4px;" width="13" height="15" viewBox="0 0 13 15"><defs><linearGradient id="xf" x1="0" y1="0" x2="1" y2="0"><stop offset="0" stop-color="#ffedb0"/><stop offset="1" stop-color="#ffe08a"/></linearGradient></defs><path d="M0 0.3 H11.8 V8.6 H13 V15 H0 Z" fill="url(#xf)"/><path d="M10.3 9 H12.7 V14.6 H10.3 Z" fill="#ffe494" stroke="#f2cf72" stroke-width="0.6"/><rect x="0" y="14.2" width="13" height="0.8" fill="#f0cb68"/></svg>
<span class="t" style="left:1001.4px;top:772.0px;font-size:12.5px;line-height:20px;color:#000;letter-spacing:0.38px;">WeGameApps</span>
<span class="t" style="left:1241px;top:772.0px;font-size:12.5px;line-height:20px;color:#6d6d6d;letter-spacing:0.28px;">2025/6/25 23:46</span>
<span class="t" style="left:1384.8px;top:772.0px;font-size:12px;line-height:20px;color:#6d6d6d;letter-spacing:0.2px;">文件夹</span>
<svg style="left:983px;top:794.4px;" width="13" height="15" viewBox="0 0 13 15"><defs><linearGradient id="xf" x1="0" y1="0" x2="1" y2="0"><stop offset="0" stop-color="#ffedb0"/><stop offset="1" stop-color="#ffe08a"/></linearGradient></defs><path d="M0 0.3 H11.8 V8.6 H13 V15 H0 Z" fill="url(#xf)"/><path d="M10.3 9 H12.7 V14.6 H10.3 Z" fill="#ffe494" stroke="#f2cf72" stroke-width="0.6"/><rect x="0" y="14.2" width="13" height="0.8" fill="#f0cb68"/></svg>
<span class="t" style="left:1001.4px;top:793.0px;font-size:12.5px;line-height:20px;color:#000;letter-spacing:0.35px;">WindowsApps</span>
<span class="t" style="left:1241px;top:793.0px;font-size:12.5px;line-height:20px;color:#6d6d6d;letter-spacing:0.28px;">2025/4/27 21:17</span>
<span class="t" style="left:1384.8px;top:793.0px;font-size:12px;line-height:20px;color:#6d6d6d;letter-spacing:0.2px;">文件夹</span>
<svg style="left:983px;top:815.4px;" width="13" height="15" viewBox="0 0 13 15"><defs><linearGradient id="xf" x1="0" y1="0" x2="1" y2="0"><stop offset="0" stop-color="#ffedb0"/><stop offset="1" stop-color="#ffe08a"/></linearGradient></defs><path d="M0 0.3 H11.8 V8.6 H13 V15 H0 Z" fill="url(#xf)"/><path d="M10.3 9 H12.7 V14.6 H10.3 Z" fill="#ffe494" stroke="#f2cf72" stroke-width="0.6"/><rect x="0" y="14.2" width="13" height="0.8" fill="#f0cb68"/></svg>
<span class="t" style="left:1001.4px;top:814.0px;font-size:12px;line-height:20px;color:#000;letter-spacing:-0.03px;">迅雷下载</span>
<span class="t" style="left:1241px;top:814.0px;font-size:12.5px;line-height:20px;color:#6d6d6d;letter-spacing:0.29px;">2025/8/29 1:27</span>
<span class="t" style="left:1384.8px;top:814.0px;font-size:12px;line-height:20px;color:#6d6d6d;letter-spacing:0.2px;">文件夹</span>
<svg style="left:983px;top:836.4px;" width="13" height="15" viewBox="0 0 13 15"><defs><linearGradient id="xf" x1="0" y1="0" x2="1" y2="0"><stop offset="0" stop-color="#ffedb0"/><stop offset="1" stop-color="#ffe08a"/></linearGradient></defs><path d="M0 0.3 H11.8 V8.6 H13 V15 H0 Z" fill="url(#xf)"/><path d="M10.3 9 H12.7 V14.6 H10.3 Z" fill="#ffe494" stroke="#f2cf72" stroke-width="0.6"/><rect x="0" y="14.2" width="13" height="0.8" fill="#f0cb68"/></svg>
<span class="t" style="left:1001.4px;top:835.0px;font-size:12px;line-height:20px;color:#000;letter-spacing:-0.03px;">迅雷云盘</span>
<span class="t" style="left:1241px;top:835.0px;font-size:12.5px;line-height:20px;color:#6d6d6d;letter-spacing:0.29px;">2025/8/29 1:32</span>
<span class="t" style="left:1384.8px;top:835.0px;font-size:12px;line-height:20px;color:#6d6d6d;letter-spacing:0.2px;">文件夹</span>
<svg style="left:983.5px;top:857px;" width="12" height="16" viewBox="0 0 12 16"><path d="M0.5 0.5 H8 L11.5 4 V15.5 H0.5 Z" fill="#fff" stroke="#b4b4b4" stroke-width="1"/><path d="M8 0.5 V4 H11.5" fill="none" stroke="#b4b4b4" stroke-width="0.8"/></svg>
<span class="t" style="left:1001.4px;top:856.0px;font-size:12.5px;line-height:20px;color:#000;letter-spacing:0.25px;">.GamingRoot</span>
<span class="t" style="left:1241px;top:856.0px;font-size:12.5px;line-height:20px;color:#6d6d6d;letter-spacing:0.28px;">2025/4/27 19:09</span>
<span class="t" style="left:1384.8px;top:856.0px;font-size:12.5px;line-height:20px;color:#6d6d6d;letter-spacing:-0.0px;">GAMINGROOT ...</span>
<span class="t" style="left:1544.3px;top:856.0px;font-size:12.5px;line-height:20px;color:#6d6d6d;letter-spacing:-0.16px;">1 KB</span>
<div style="left:1018px;top:732px;width:188px;height:54px;background:#fff;border:1px solid #767676;box-shadow:3px 3px 3px rgba(0,0,0,0.35)"></div>
<span class="t" style="left:1024px;top:733.2px;font-size:12px;line-height:20px;color:#575757;letter-spacing:0.43px;">创建日期: 2025/11/4 19:59</span>
<span class="t" style="left:1024px;top:750.5px;font-size:12px;line-height:20px;color:#575757;letter-spacing:0.17px;">大小: 212 GB</span>
<span class="t" style="left:1024px;top:767.5px;font-size:12px;line-height:20px;color:#575757;letter-spacing:-0.07px;">文件夹: CACHE, EXPORT, TEMP</span>
<span class="t" style="left:652.7px;top:976.6px;font-size:12px;line-height:20px;color:#1e395b;letter-spacing:0.07px;">16 个项目</span>
<div style="left:716px;top:979px;width:1px;height:15px;background:#e8e8e8"></div>
<span class="t" style="left:727px;top:976.6px;font-size:12px;line-height:20px;color:#1e395b;letter-spacing:0.14px;">选中 1 个项目</span>
<div style="left:812px;top:979px;width:1px;height:15px;background:#e8e8e8"></div>
<div style="left:1889px;top:975px;width:24px;height:22px;background:#cce8ff;border:1px solid #7ab8e8"></div>
<svg style="left:1893px;top:979px;" width="18" height="15" viewBox="0 0 18 15"><g fill="none" stroke="#7a6a6a" stroke-width="0.9"><rect x="0.5" y="0.5" width="3" height="3"/><rect x="0.5" y="5.5" width="3" height="3"/><rect x="0.5" y="10.5" width="3" height="3"/></g><g fill="#8a8a8a"><rect x="5.5" y="1.5" width="5" height="1"/><rect x="12" y="1.5" width="5" height="1"/><rect x="5.5" y="6.5" width="5" height="1"/><rect x="12" y="6.5" width="5" height="1"/><rect x="5.5" y="11.5" width="5" height="1"/><rect x="12" y="11.5" width="5" height="1"/></g></svg>
<div style="left:0;top:1036px;width:1912px;height:31px;background:radial-gradient(ellipse 48px 20px at 570px 30px,rgba(0,0,0,0.4),rgba(0,0,0,0) 100%),radial-gradient(ellipse 60px 16px at 545px 0px,rgba(150,150,150,0.5),rgba(150,150,150,0) 100%),linear-gradient(90deg,#979797 0px,#a2a2a2 150px,#a9a9a9 300px,#a6a6a6 440px,#9c9c9c 510px,#7c7c7c 545px,#5e5e5e 590px,#4c4c4c 650px,#3f3f3f 720px,#353535 800px,#2e2e2e 900px,#282828 1000px,#212121 1200px,#171717 1320px,#0f0f0f 1500px,#0a0a0a 1912px)"></div>
<div style="left:0;top:1036px;width:540px;height:31px;background:repeating-linear-gradient(118deg,rgba(0,0,0,0) 0 9px,rgba(0,0,0,0.04) 9px 13px,rgba(255,255,255,0.035) 13px 17px);-webkit-mask-image:linear-gradient(90deg,#000 0,#000 85%,transparent 100%);mask-image:linear-gradient(90deg,#000 0,#000 85%,transparent 100%)"></div>
<div style="left:391px;top:1036px;width:48px;height:31px;background:rgba(255,255,255,0.17)"></div>
<svg style="left:14px;top:1047.5px;" width="16" height="16" viewBox="0 0 16 16"><g fill="#fff"><path d="M0 2.3 L6.6 1.4 V7.6 H0 Z"/><path d="M7.4 1.3 L16 0 V7.6 H7.4 Z"/><path d="M0 8.4 H6.6 V14.6 L0 13.7 Z"/><path d="M7.4 8.4 H16 V16 L7.4 14.7 Z"/></g></svg>
<svg style="left:56px;top:1044px;" width="28" height="26" viewBox="0 0 28 26"><circle cx="16" cy="10.6" r="8" fill="none" stroke="#fff" stroke-width="2.2"/><path d="M10.4 16.6 L2 26" stroke="#fff" stroke-width="2.6"/></svg>
<svg style="left:110px;top:1044px;" width="22" height="22" viewBox="0 0 22 22"><circle cx="11" cy="11" r="10.5" fill="#2b2a30" stroke="#d8d8d8" stroke-width="1"/><g fill="none" stroke="#e8e8e8" stroke-width="1.3"><path d="M11 11 C8 7 10 3 13 2.5"/><path d="M11 11 C16 10.5 18.5 14 17 17.5"/><path d="M11 11 C9 15.5 5 16 2.6 13.5"/></g></svg>
<svg style="left:159px;top:1044px;" width="22" height="22" viewBox="0 0 22 22"><defs><linearGradient id="stm" x1="0" y1="0" x2="0" y2="1"><stop offset="0" stop-color="#111d2e"/><stop offset="1" stop-color="#1a74b0"/></linearGradient></defs><circle cx="11" cy="11" r="11" fill="url(#stm)"/><circle cx="14.6" cy="8" r="3.6" fill="none" stroke="#fff" stroke-width="1.6"/><path d="M0.5 12 L8 15 L12 10.5" fill="none" stroke="#fff" stroke-width="2.6"/><circle cx="7.4" cy="15.6" r="2.6" fill="#fff"/></svg>
<svg style="left:207px;top:1043.5px;" width="24" height="24" viewBox="0 0 24 24"><rect x="0" y="0" width="24" height="24" rx="4.5" fill="#07c160"/><ellipse cx="9.6" cy="10.6" rx="6.4" ry="5.4" fill="#fff"/><ellipse cx="15.6" cy="15" rx="5.2" ry="4.4" fill="#fff" stroke="#07c160" stroke-width="1"/><circle cx="7.4" cy="9.2" r="0.9" fill="#07c160"/><circle cx="11.8" cy="9.2" r="0.9" fill="#07c160"/><circle cx="13.8" cy="14" r="0.8" fill="#07c160"/><circle cx="17.4" cy="14" r="0.8" fill="#07c160"/></svg>
<svg style="left:256px;top:1043.5px;" width="25" height="25" viewBox="0 0 25 25"><defs><linearGradient id="qk" x1="0" y1="0" x2="0" y2="1"><stop offset="0" stop-color="#1c8cf0"/><stop offset="1" stop-color="#5cc0fa"/></linearGradient></defs><circle cx="12.2" cy="12" r="8.9" fill="none" stroke="url(#qk)" stroke-width="5.2"/><path d="M12 25 C9 25 9 20.4 12.3 20 C12.9 16.4 18.3 16 19.5 19 C23 18.6 25 21 25 25 Z" fill="#fff"/></svg>
<div style="left:306.4px;top:1045px;width:20.6px;height:20.3px;background:#00005b;border-radius:4px"></div>
<span class="t" style="left:310.4px;top:1044.6px;font-size:13.5px;line-height:20px;color:#9999ff;letter-spacing:0.41px;font-weight:bold;">Pr</span>
<div style="left:355.4px;top:1045px;width:20.6px;height:20.3px;background:#00005b;border-radius:4px"></div>
<span class="t" style="left:357.4px;top:1044.6px;font-size:13px;line-height:20px;color:#9999ff;letter-spacing:-0.01px;font-weight:bold;">Me</span>
<svg style="left:404px;top:1047px;" width="21" height="17" viewBox="0 0 21 17"><path d="M0 0.8 Q0 0 0.8 0 H8.6 L10 1.6 H20.4 Q21 1.6 21 2.4 V17 H0 Z" fill="#e7a70c"/><path d="M0 2.6 H8.8 L10.2 1.5 H21 V17 H0 Z" fill="#ffd965"/><path d="M4 9.4 H17 V17 H4 Z" fill="#3a97e8"/><path d="M4 9.4 H17 V11.4 H4 Z" fill="#2b82d6"/><rect x="8.4" y="13.4" width="4.2" height="3.6" fill="#ffd965"/></svg>
<span class="t" style="left:1866px;top:1036.5px;font-size:12.5px;line-height:20px;color:#fff;letter-spacing:0.04px;">22:42</span>
<span class="t" style="left:1852.6px;top:1054.2px;font-size:12.5px;line-height:20px;color:#fff;letter-spacing:0.72px;">2025/11/4</span>
</body></html>
